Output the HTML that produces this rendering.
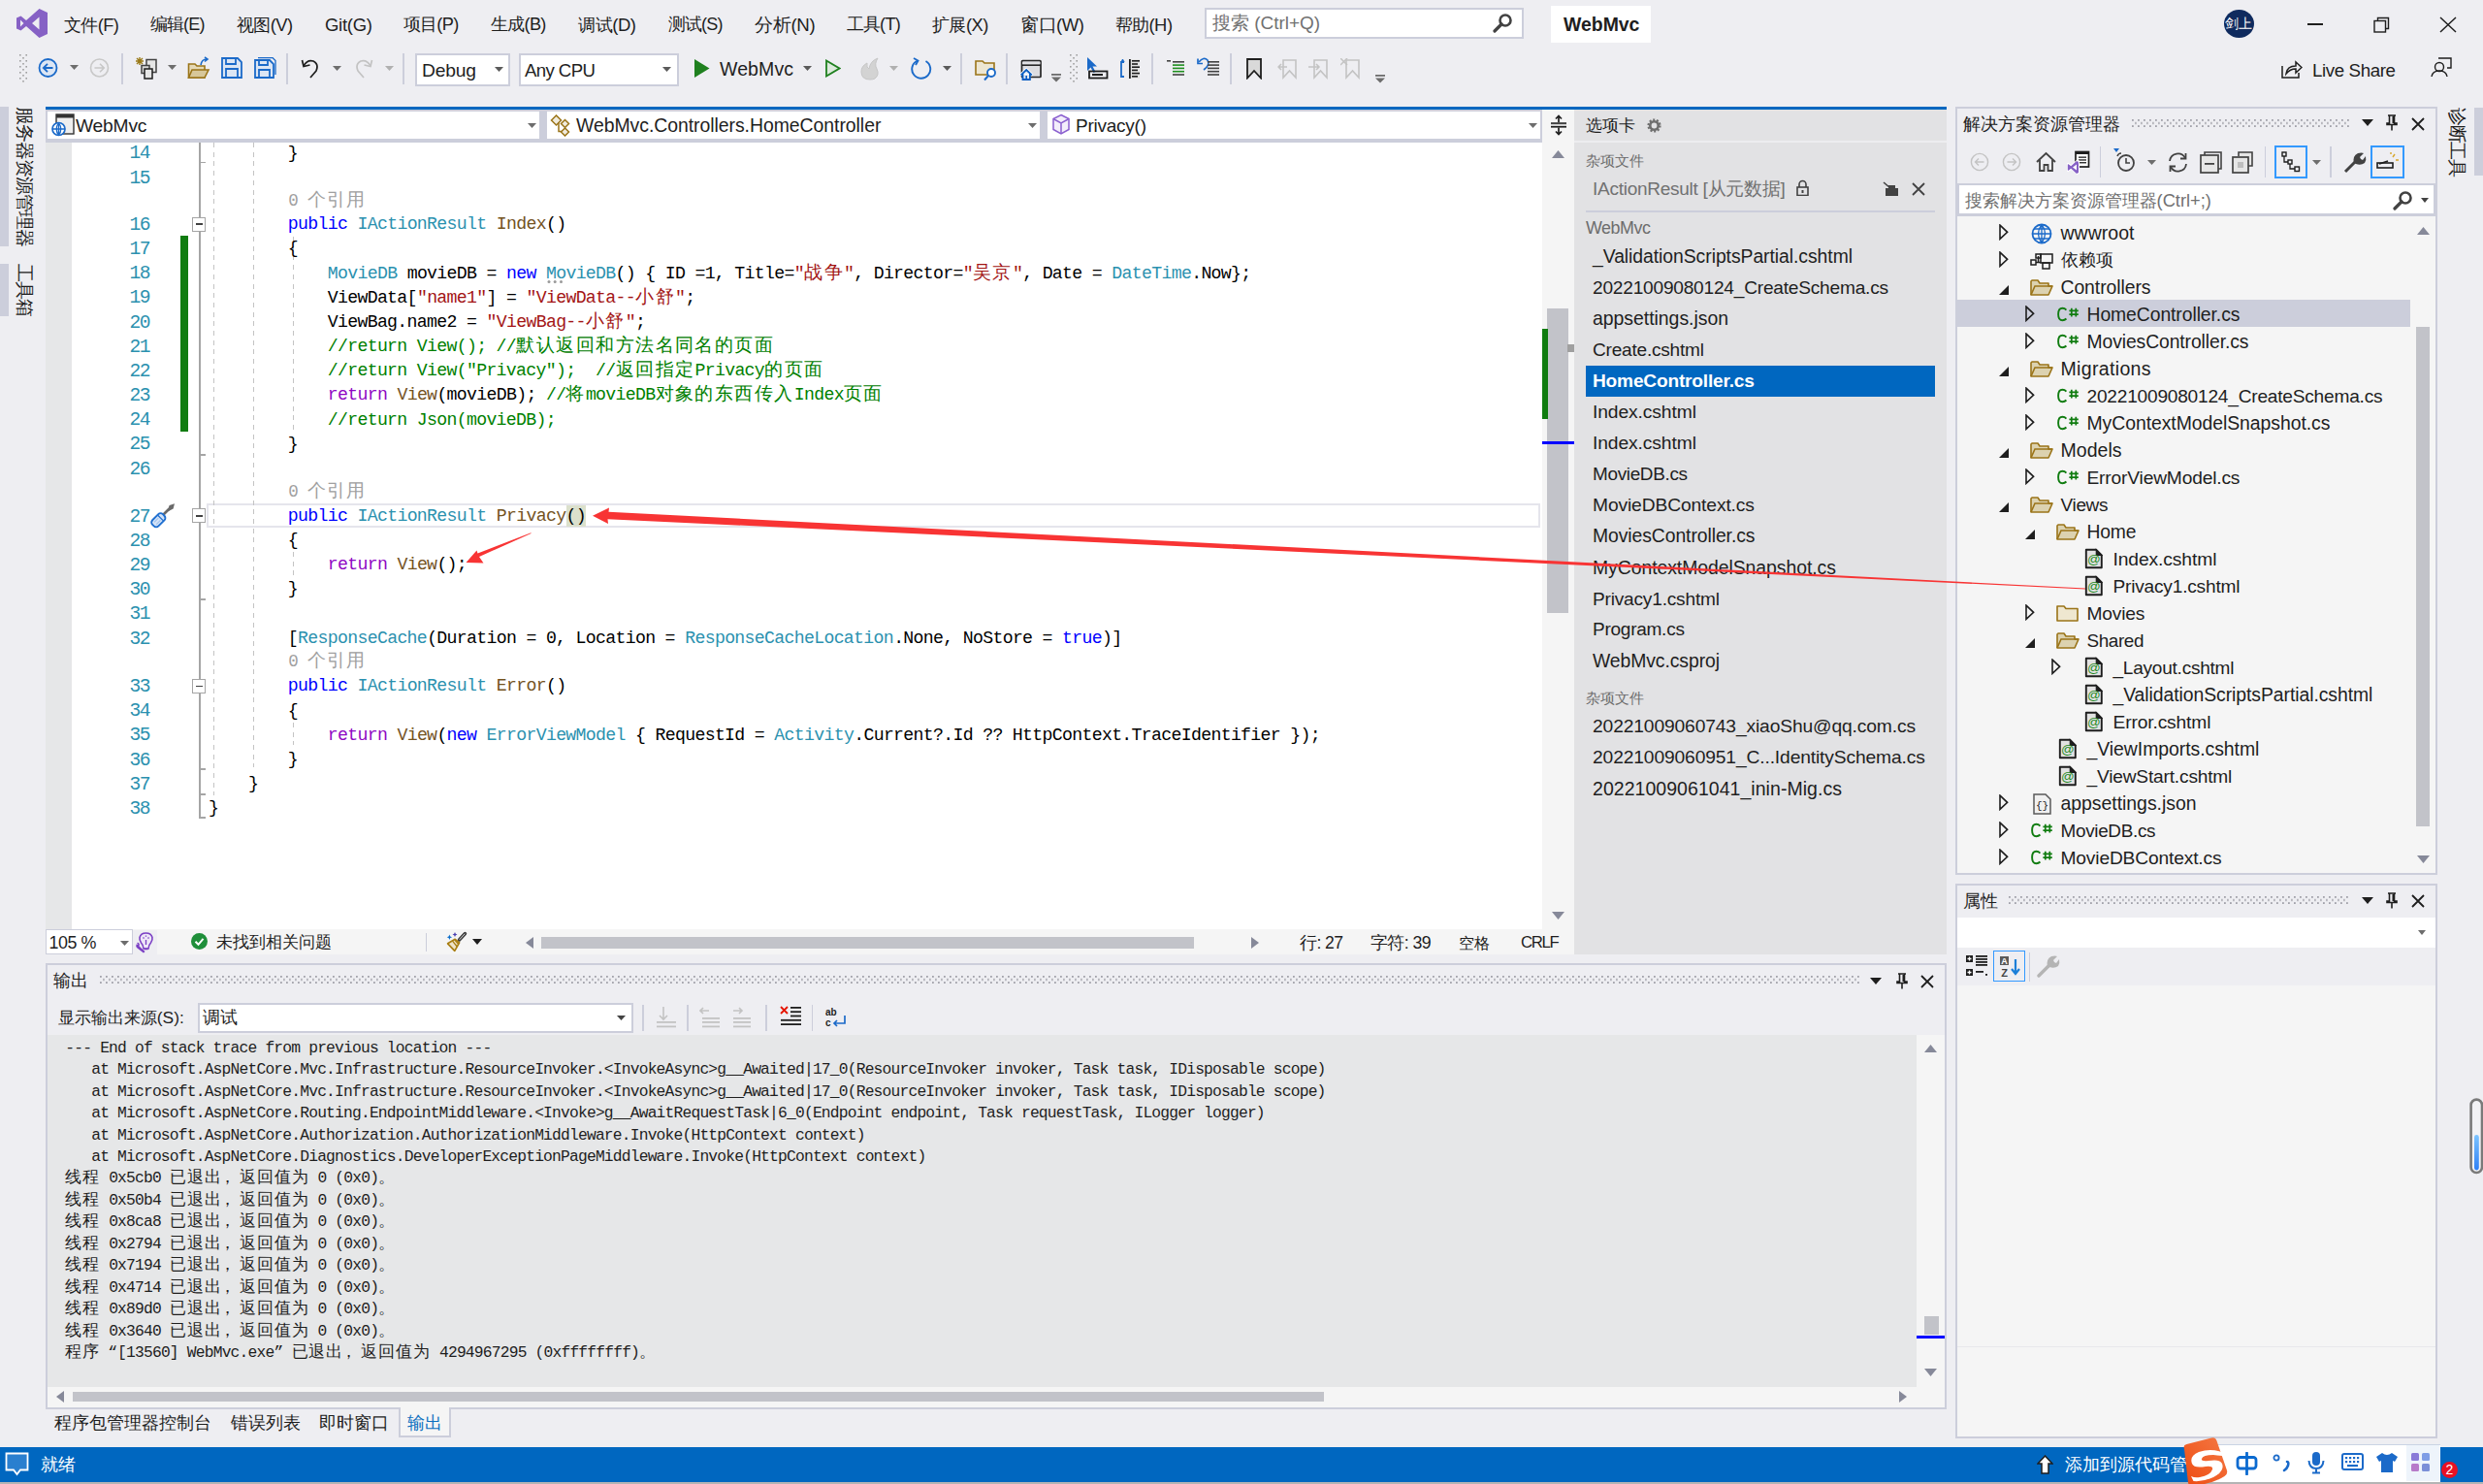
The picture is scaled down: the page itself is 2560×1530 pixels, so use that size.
<!DOCTYPE html>
<html><head><meta charset="utf-8"><title>VS</title>
<style>
html,body{margin:0;padding:0;width:2560px;height:1530px;overflow:hidden;background:#EEEEF2;}
body>div,body>svg{position:absolute;box-sizing:content-box;}
body{font-family:'Liberation Sans', sans-serif;}
</style></head><body>
<svg style="left:17px;top:9px" width="32" height="30" viewBox="0 0 32 30"><path d="M23.5 0 L32 4 V26 L23.5 30 L10 18 L4.5 22.5 L0 20.5 V9.5 L4.5 7.5 L10 12 Z M23.5 8.5 L16 15 L23.5 21.5 Z M4 11.5 V18.5 L7.5 15 Z" fill="#8661C5" fill-rule="evenodd"/></svg>
<div id="t1" style="left:66px;top:13.0px;height:25px;line-height:25px;font-family:'Liberation Sans', sans-serif;font-size:18.24px;color:#1E1E1E;font-weight:normal;white-space:pre;letter-spacing:-0.596px;">文件(F)</div>
<div id="t2" style="left:154.6px;top:13.0px;height:25px;line-height:25px;font-family:'Liberation Sans', sans-serif;font-size:18.04px;color:#1E1E1E;font-weight:normal;white-space:pre;letter-spacing:-0.758px;">编辑(E)</div>
<div id="t3" style="left:243.9px;top:13.0px;height:25px;line-height:25px;font-family:'Liberation Sans', sans-serif;font-size:18.32px;color:#1E1E1E;font-weight:normal;white-space:pre;letter-spacing:-0.543px;">视图(V)</div>
<div id="t4" style="left:335px;top:13.0px;height:25px;line-height:25px;font-family:'Liberation Sans', sans-serif;font-size:18.49px;color:#1E1E1E;font-weight:normal;white-space:pre;letter-spacing:-0.268px;">Git(G)</div>
<div id="t5" style="left:415.6px;top:13.0px;height:25px;line-height:25px;font-family:'Liberation Sans', sans-serif;font-size:18.18px;color:#1E1E1E;font-weight:normal;white-space:pre;letter-spacing:-0.651px;">项目(P)</div>
<div id="t6" style="left:505.8px;top:13.0px;height:25px;line-height:25px;font-family:'Liberation Sans', sans-serif;font-size:18.18px;color:#1E1E1E;font-weight:normal;white-space:pre;letter-spacing:-0.651px;">生成(B)</div>
<div id="t7" style="left:596px;top:13.0px;height:25px;line-height:25px;font-family:'Liberation Sans', sans-serif;font-size:18.49px;color:#1E1E1E;font-weight:normal;white-space:pre;letter-spacing:-0.418px;">调试(D)</div>
<div id="t8" style="left:688.5px;top:13.0px;height:25px;line-height:25px;font-family:'Liberation Sans', sans-serif;font-size:18.07px;color:#1E1E1E;font-weight:normal;white-space:pre;letter-spacing:-0.735px;">测试(S)</div>
<div id="t9" style="left:778px;top:13.0px;height:25px;line-height:25px;font-family:'Liberation Sans', sans-serif;font-size:18.64px;color:#1E1E1E;font-weight:normal;white-space:pre;letter-spacing:-0.296px;">分析(N)</div>
<div id="t10" style="left:872.5px;top:13.0px;height:25px;line-height:25px;font-family:'Liberation Sans', sans-serif;font-size:18.08px;color:#1E1E1E;font-weight:normal;white-space:pre;letter-spacing:-0.715px;">工具(T)</div>
<div id="t11" style="left:961px;top:13.0px;height:25px;line-height:25px;font-family:'Liberation Sans', sans-serif;font-size:18.34px;color:#1E1E1E;font-weight:normal;white-space:pre;letter-spacing:-0.531px;">扩展(X)</div>
<div id="t12" style="left:1052px;top:13.0px;height:25px;line-height:25px;font-family:'Liberation Sans', sans-serif;font-size:18.5px;color:#1E1E1E;font-weight:normal;white-space:pre;letter-spacing:-0.443px;">窗口(W)</div>
<div id="t13" style="left:1149.5px;top:13.0px;height:25px;line-height:25px;font-family:'Liberation Sans', sans-serif;font-size:18.39px;color:#1E1E1E;font-weight:normal;white-space:pre;letter-spacing:-0.503px;">帮助(H)</div>
<div style="left:1242px;top:7.5px;width:325px;height:28px;background:#FFFFFF;border:2px solid #CCCEDB;"></div>
<div id="t14" style="left:1250px;top:11.0px;height:25px;line-height:25px;font-family:'Liberation Sans', sans-serif;font-size:18.97px;color:#717171;font-weight:normal;white-space:pre;letter-spacing:-0.018px;">搜索 (Ctrl+Q)</div>
<svg style="left:1539px;top:13px" width="21" height="21" viewBox="0 0 21 21"><circle cx="13" cy="8" r="5.5" fill="none" stroke="#424242" stroke-width="2.6"/><path d="M9 12 L2 19" stroke="#424242" stroke-width="3.2" stroke-linecap="round"/></svg>
<div style="left:1599px;top:6px;width:103px;height:38px;background:#FFFFFF;"></div>
<div id="t15" style="left:1612px;top:12.5px;height:25px;line-height:25px;font-family:'Liberation Sans', sans-serif;font-size:19.47px;color:#1E1E1E;font-weight:bold;white-space:pre;letter-spacing:-0.025px;">WebMvc</div>
<div style="left:2293px;top:9.5px;width:31px;height:29px;border-radius:50%;background:#0F2A5E;"></div>
<div id="t16" style="left:2294px;top:15.0px;height:19px;line-height:19px;font-family:'Liberation Sans', sans-serif;font-size:14.02px;color:#FFFFFF;font-weight:normal;white-space:pre;letter-spacing:0.000px;">剑上</div>
<div style="left:2379px;top:24px;width:16px;height:1.5px;background:#1E1E1E;"></div>
<svg style="left:2447px;top:17px" width="18" height="17" viewBox="0 0 18 17"><rect x="1" y="4.5" width="11.5" height="11.5" fill="none" stroke="#1E1E1E" stroke-width="1.4"/><path d="M4.5 4.5 V1.5 H15.5 V12.5 H12.5" fill="none" stroke="#1E1E1E" stroke-width="1.4"/></svg>
<svg style="left:2515px;top:17px" width="18" height="17" viewBox="0 0 18 17"><path d="M1 1 L17 16 M17 1 L1 16" stroke="#1E1E1E" stroke-width="1.5"/></svg>
<svg style="left:19.5px;top:55.8px" width="9" height="30" viewBox="0 0 9 30"><rect x="0" y="0" width="1.6" height="1.6" fill="#A0A0A0"/><rect x="6.4" y="0" width="1.6" height="1.6" fill="#A0A0A0"/><rect x="3.2" y="3" width="1.6" height="1.6" fill="#A0A0A0"/><rect x="0" y="6" width="1.6" height="1.6" fill="#A0A0A0"/><rect x="6.4" y="6" width="1.6" height="1.6" fill="#A0A0A0"/><rect x="3.2" y="9" width="1.6" height="1.6" fill="#A0A0A0"/><rect x="0" y="12" width="1.6" height="1.6" fill="#A0A0A0"/><rect x="6.4" y="12" width="1.6" height="1.6" fill="#A0A0A0"/><rect x="3.2" y="15" width="1.6" height="1.6" fill="#A0A0A0"/><rect x="0" y="18" width="1.6" height="1.6" fill="#A0A0A0"/><rect x="6.4" y="18" width="1.6" height="1.6" fill="#A0A0A0"/><rect x="3.2" y="21" width="1.6" height="1.6" fill="#A0A0A0"/><rect x="0" y="24" width="1.6" height="1.6" fill="#A0A0A0"/><rect x="6.4" y="24" width="1.6" height="1.6" fill="#A0A0A0"/><rect x="3.2" y="27" width="1.6" height="1.6" fill="#A0A0A0"/></svg>
<svg style="left:39px;top:59px" width="22" height="22" viewBox="0 0 22 22"><circle cx="10.5" cy="11" r="9" fill="#DCE6F4" stroke="#1B6AC9" stroke-width="1.8"/><path d="M15.5 11 H6 M10 6.8 L5.8 11 L10 15.2" fill="none" stroke="#1B6AC9" stroke-width="1.8"/></svg>
<svg style="left:72px;top:67px" width="9" height="6" viewBox="0 0 9 6"><path d="M0 0 H9 L4.5 5 Z" fill="#6D6D6D"/></svg>
<svg style="left:92px;top:59px" width="22" height="22" viewBox="0 0 22 22"><circle cx="10.5" cy="11" r="9" fill="none" stroke="#C8C8C8" stroke-width="1.6"/><path d="M5.5 11 H15 M11 6.8 L15.2 11 L11 15.2" fill="none" stroke="#C8C8C8" stroke-width="1.6"/></svg>
<div style="left:124.5px;top:55px;width:2px;height:32px;background:#CCCEDB;"></div>
<svg style="left:139px;top:58px" width="26" height="26" viewBox="0 0 26 26"><g stroke="#9A7A18" stroke-width="1.4"><path d="M5 1 V9 M1 5 H9 M2 2 L8 8 M8 2 L2 8"/></g><rect x="12" y="3.5" width="10" height="13" fill="#E6E6E6" stroke="#424242" stroke-width="1.5"/><rect x="7" y="9.5" width="8" height="8" fill="#D8D8D8" stroke="#424242" stroke-width="1.5"/><rect x="10" y="13" width="8" height="10" fill="#E6E6E6" stroke="#1E1E1E" stroke-width="1.5"/></svg>
<svg style="left:173px;top:67px" width="9" height="6" viewBox="0 0 9 6"><path d="M0 0 H9 L4.5 5 Z" fill="#6D6D6D"/></svg>
<svg style="left:193px;top:58px" width="24" height="24" viewBox="0 0 24 24"><path d="M1.5 8 H8 L10 10 H18 V22 H1.5 Z" fill="#E5D9B6" stroke="#9A7418" stroke-width="1.6"/><path d="M1.5 22 L5 14 H22 L18 22 Z" fill="#D7C79A" stroke="#9A7418" stroke-width="1.6"/><path d="M14 9 Q15 3 20 3 M18 1 L21 3 L18 5.5" fill="none" stroke="#1B6AC9" stroke-width="1.6"/></svg>
<svg style="left:228px;top:59px" width="22" height="22" viewBox="0 0 22 22"><path d="M1 1 H17 L21 5 V21 H1 Z" fill="#DCE6F4" stroke="#1B6AC9" stroke-width="1.8"/><path d="M5 1 V7 H15 V1 M5 21 V12 H17 V21" fill="none" stroke="#1B6AC9" stroke-width="1.8"/></svg>
<svg style="left:262px;top:59px" width="23" height="22" viewBox="0 0 23 22"><path d="M4 0.5 H19 L22 3.5 V18" fill="none" stroke="#1B6AC9" stroke-width="1.3"/><path d="M1 3 H16 L20 7 V21 H1 Z" fill="#DCE6F4" stroke="#1B6AC9" stroke-width="1.8"/><path d="M5 3 V8 H14 V3 M5 21 V13 H16 V21" fill="none" stroke="#1B6AC9" stroke-width="1.8"/></svg>
<div style="left:294.5px;top:55px;width:2px;height:32px;background:#CCCEDB;"></div>
<svg style="left:310px;top:59px" width="20" height="22" viewBox="0 0 20 22"><path d="M3 9 Q7 2 13 4 Q19 7 16 14 L10 21" fill="none" stroke="#1E1E1E" stroke-width="1.7"/><path d="M1.5 3 L3 9.5 L9.5 8" fill="none" stroke="#1E1E1E" stroke-width="1.7"/></svg>
<svg style="left:343px;top:68px" width="9" height="6" viewBox="0 0 9 6"><path d="M0 0 H9 L4.5 5 Z" fill="#6D6D6D"/></svg>
<svg style="left:365px;top:59px" width="20" height="22" viewBox="0 0 20 22"><path d="M17 9 Q13 2 7 4 Q1 7 4 14 L10 21" fill="none" stroke="#C3C3C3" stroke-width="1.7"/><path d="M18.5 3 L17 9.5 L10.5 8" fill="none" stroke="#C3C3C3" stroke-width="1.7"/></svg>
<svg style="left:397px;top:68px" width="9" height="6" viewBox="0 0 9 6"><path d="M0 0 H9 L4.5 5 Z" fill="#B0B0B0"/></svg>
<div style="left:415px;top:55px;width:2px;height:32px;background:#CCCEDB;"></div>
<div style="left:428px;top:55px;width:94px;height:30px;background:#FFFFFF;border:2px solid #CCCEDB;"></div>
<div id="t17" style="left:435px;top:59.5px;height:25px;line-height:25px;font-family:'Liberation Sans', sans-serif;font-size:19.25px;color:#1E1E1E;font-weight:normal;white-space:pre;letter-spacing:-0.182px;">Debug</div>
<svg style="left:510px;top:69px" width="9" height="6" viewBox="0 0 9 6"><path d="M0 0 H9 L4.5 5 Z" fill="#5A5A5A"/></svg>
<div style="left:535px;top:55px;width:161px;height:30px;background:#FFFFFF;border:2px solid #CCCEDB;"></div>
<div id="t18" style="left:541px;top:59.5px;height:25px;line-height:25px;font-family:'Liberation Sans', sans-serif;font-size:18.6px;color:#1E1E1E;font-weight:normal;white-space:pre;letter-spacing:-0.586px;">Any CPU</div>
<svg style="left:683px;top:69px" width="9" height="6" viewBox="0 0 9 6"><path d="M0 0 H9 L4.5 5 Z" fill="#5A5A5A"/></svg>
<svg style="left:716px;top:61px" width="16" height="19" viewBox="0 0 16 19"><path d="M0 0 L15.5 9.5 L0 19 Z" fill="#1F801F"/></svg>
<div id="t19" style="left:742px;top:58.5px;height:25px;line-height:25px;font-family:'Liberation Sans', sans-serif;font-size:19.5px;color:#1E1E1E;font-weight:normal;white-space:pre;letter-spacing:0.100px;">WebMvc</div>
<svg style="left:828px;top:68px" width="9" height="6" viewBox="0 0 9 6"><path d="M0 0 H9 L4.5 5 Z" fill="#5A5A5A"/></svg>
<svg style="left:851px;top:61px" width="16" height="19" viewBox="0 0 16 19"><path d="M1 1.5 L14.5 9.5 L1 17.5 Z" fill="#DCEADC" stroke="#1F801F" stroke-width="1.8"/></svg>
<svg style="left:886px;top:59px" width="22" height="24" viewBox="0 0 22 24"><path d="M11 23 Q2 23 2 15 Q2 9 8 6 Q7 11 10 12 Q11 4 19 1 Q15 7 18 12 Q21 18 16 22 Q14 23 11 23 Z" fill="#D3D3D3" stroke="#C6C6C6" stroke-width="1"/></svg>
<svg style="left:917px;top:68px" width="9" height="6" viewBox="0 0 9 6"><path d="M0 0 H9 L4.5 5 Z" fill="#B0B0B0"/></svg>
<svg style="left:939px;top:59px" width="22" height="24" viewBox="0 0 22 24"><path d="M7 3.5 A9.5 9.5 0 1 0 15.5 4" fill="none" stroke="#1B6AC9" stroke-width="1.9"/><path d="M3 1 L7.5 3.5 L5 8" fill="none" stroke="#1B6AC9" stroke-width="1.9"/></svg>
<svg style="left:972px;top:68px" width="9" height="6" viewBox="0 0 9 6"><path d="M0 0 H9 L4.5 5 Z" fill="#5A5A5A"/></svg>
<div style="left:990px;top:55px;width:2px;height:32px;background:#CCCEDB;"></div>
<svg style="left:1005px;top:61px" width="24" height="23" viewBox="0 0 24 23"><path d="M1 2 H8 L10 4 H20 V16 H1 Z" fill="#EDE6D2" stroke="#9A7418" stroke-width="1.6"/><circle cx="17" cy="14" r="4" fill="#FFFFFF" stroke="#1B6AC9" stroke-width="1.9"/><path d="M14 17 L10 21.5" stroke="#1B6AC9" stroke-width="2"/></svg>
<div style="left:1037px;top:55px;width:2px;height:32px;background:#CCCEDB;"></div>
<svg style="left:1051px;top:61px" width="25" height="23" viewBox="0 0 25 23"><rect x="2.5" y="1.5" width="19.5" height="17" rx="0.8" fill="#DCDCE0" stroke="#262626" stroke-width="1.7"/><rect x="3" y="3" width="18.5" height="2.6" fill="#E0E0E4"/><rect x="2.5" y="5.4" width="19.5" height="1.6" fill="#262626"/><path d="M1 16.5 L7.2 10.6 L13.4 16.5" fill="#FFFFFF" stroke="#FFFFFF" stroke-width="3"/><path d="M1.6 16.3 L7.2 11 L12.8 16.3 M3.5 14.8 V21 H10.9 V14.8" fill="#DCE6F4" stroke="#0A5EC2" stroke-width="1.8"/><rect x="6.4" y="17" width="1.6" height="4" fill="#0A5EC2"/></svg>
<svg style="left:1084px;top:76px" width="10" height="9" viewBox="0 0 10 9"><rect x="0" y="0" width="10" height="1.8" fill="#6D6D6D"/><path d="M0 3.5 H10 L5 8.5 Z" fill="#6D6D6D"/></svg>
<svg style="left:1103px;top:55.8px" width="9" height="30" viewBox="0 0 9 30"><rect x="0" y="0" width="1.6" height="1.6" fill="#A0A0A0"/><rect x="6.4" y="0" width="1.6" height="1.6" fill="#A0A0A0"/><rect x="3.2" y="3" width="1.6" height="1.6" fill="#A0A0A0"/><rect x="0" y="6" width="1.6" height="1.6" fill="#A0A0A0"/><rect x="6.4" y="6" width="1.6" height="1.6" fill="#A0A0A0"/><rect x="3.2" y="9" width="1.6" height="1.6" fill="#A0A0A0"/><rect x="0" y="12" width="1.6" height="1.6" fill="#A0A0A0"/><rect x="6.4" y="12" width="1.6" height="1.6" fill="#A0A0A0"/><rect x="3.2" y="15" width="1.6" height="1.6" fill="#A0A0A0"/><rect x="0" y="18" width="1.6" height="1.6" fill="#A0A0A0"/><rect x="6.4" y="18" width="1.6" height="1.6" fill="#A0A0A0"/><rect x="3.2" y="21" width="1.6" height="1.6" fill="#A0A0A0"/><rect x="0" y="24" width="1.6" height="1.6" fill="#A0A0A0"/><rect x="6.4" y="24" width="1.6" height="1.6" fill="#A0A0A0"/><rect x="3.2" y="27" width="1.6" height="1.6" fill="#A0A0A0"/></svg>
<svg style="left:1119px;top:59px" width="24" height="23" viewBox="0 0 24 23"><path d="M2 0 L2 14 L5.5 10.5 L8.5 16 L10.5 15 L7.5 9.5 L12 9.5 Z" fill="#1B6AC9"/><rect x="4" y="14.5" width="18.5" height="7" fill="none" stroke="#1E1E1E" stroke-width="1.8"/><rect x="7" y="17" width="11" height="2" fill="#1E1E1E"/></svg>
<svg style="left:1154px;top:60px" width="22" height="22" viewBox="0 0 22 22"><path d="M5 4 H2 V19 H5" fill="none" stroke="#1B6AC9" stroke-width="1.8"/><path d="M2 4 L4 1.5 M5 4 L3 1.5" stroke="#1B6AC9" stroke-width="1.6"/><rect x="10" y="1" width="1.8" height="20" fill="#1E1E1E"/><rect x="12" y="1" width="9" height="20" fill="#E3E3E3"/><rect x="13" y="2.0" width="8" height="1.6" fill="#1E1E1E"/><rect x="13" y="5.2" width="6" height="1.6" fill="#1E1E1E"/><rect x="13" y="8.4" width="8" height="1.6" fill="#1E1E1E"/><rect x="13" y="11.6" width="6" height="1.6" fill="#1E1E1E"/><rect x="13" y="14.8" width="8" height="1.6" fill="#1E1E1E"/><rect x="13" y="18.0" width="6" height="1.6" fill="#1E1E1E"/></svg>
<div style="left:1186.5px;top:55px;width:2px;height:32px;background:#CCCEDB;"></div>
<svg style="left:1203px;top:62px" width="19" height="18" viewBox="0 0 19 18"><rect x="0" y="0" width="4" height="1.6" fill="#424242"/><rect x="6" y="1.0" width="12" height="1.6" fill="#424242"/><rect x="6" y="4.3" width="12" height="1.6" fill="#1F8F1F"/><rect x="6" y="7.6" width="12" height="1.6" fill="#1F8F1F"/><rect x="6" y="10.9" width="12" height="1.6" fill="#1F8F1F"/><rect x="6" y="14.2" width="12" height="1.6" fill="#424242"/></svg>
<svg style="left:1234px;top:59px" width="23" height="21" viewBox="0 0 23 21"><path d="M2 5 Q7 -1 11 3 Q14 8 7 13" fill="none" stroke="#1B6AC9" stroke-width="1.7"/><path d="M1 1.5 V6.5 H6" fill="none" stroke="#1B6AC9" stroke-width="1.7"/><rect x="11" y="4.0" width="12" height="1.6" fill="#424242"/><rect x="11" y="7.3" width="12" height="1.6" fill="#424242"/><rect x="11" y="10.6" width="12" height="1.6" fill="#424242"/><rect x="11" y="13.9" width="12" height="1.6" fill="#424242"/><rect x="11" y="17.2" width="12" height="1.6" fill="#424242"/></svg>
<div style="left:1267.5px;top:55px;width:2px;height:32px;background:#CCCEDB;"></div>
<svg style="left:1285px;top:60px" width="16" height="22" viewBox="0 0 16 22"><path d="M1 1 H15 V20.5 L8 13 L1 20.5 Z" fill="#D9D9D9" stroke="#1E1E1E" stroke-width="1.8"/></svg>
<svg style="left:1317px;top:60px" width="21" height="22" viewBox="0 0 21 22"><path d="M6 2 H19 V20 L12.5 13 L6 20 Z" fill="none" stroke="#C3C3C3" stroke-width="1.6"/><path d="M10 9 H1 M4 6 L1 9 L4 12" fill="none" stroke="#C3C3C3" stroke-width="1.5"/></svg>
<svg style="left:1349px;top:60px" width="21" height="22" viewBox="0 0 21 22"><path d="M6 2 H19 V20 L12.5 13 L6 20 Z" fill="none" stroke="#C3C3C3" stroke-width="1.6"/><path d="M0 9 H11 M8 6 L11 9 L8 12" fill="none" stroke="#C3C3C3" stroke-width="1.5"/></svg>
<svg style="left:1382px;top:60px" width="21" height="22" viewBox="0 0 21 22"><path d="M6 2 H19 V20 L12.5 13 L6 20 Z" fill="none" stroke="#C3C3C3" stroke-width="1.6"/><path d="M0 0 L7 7 M7 0 L0 7" stroke="#C3C3C3" stroke-width="1.5"/></svg>
<svg style="left:1418px;top:77px" width="10" height="9" viewBox="0 0 10 9"><rect x="0" y="0" width="10" height="1.8" fill="#6D6D6D"/><path d="M0 3.5 H10 L5 8.5 Z" fill="#6D6D6D"/></svg>
<svg style="left:2352px;top:61px" width="22" height="20" viewBox="0 0 22 20"><path d="M1 7 V19 H18 V14" fill="none" stroke="#1E1E1E" stroke-width="1.5"/><path d="M5 15 Q6 7 15 7 V3 L21 8.5 L15 14 V10 Q9 10 5 15 Z" fill="none" stroke="#1E1E1E" stroke-width="1.5"/></svg>
<div id="t20" style="left:2384px;top:59.5px;height:25px;line-height:25px;font-family:'Liberation Sans', sans-serif;font-size:18.73px;color:#1E1E1E;font-weight:normal;white-space:pre;letter-spacing:-0.394px;">Live Share</div>
<svg style="left:2506px;top:58px" width="23" height="22" viewBox="0 0 23 22"><path d="M8 2 H21 V12 H17" fill="none" stroke="#1E1E1E" stroke-width="1.4"/><circle cx="9" cy="11" r="4.5" fill="none" stroke="#1E1E1E" stroke-width="1.4"/><path d="M1 21 Q2 15 9 15 Q16 15 17 21" fill="none" stroke="#1E1E1E" stroke-width="1.4"/></svg>
<div style="left:0px;top:110px;width:8.5px;height:144px;background:#CCCEDB;"></div>
<div style="left:0px;top:272px;width:8.5px;height:54px;background:#CCCEDB;"></div>
<div style="left:14px;top:110px;width:22px;height:144px;writing-mode:vertical-rl;text-orientation:sideways;font-size:19px;line-height:22px;color:#1E1E1E;letter-spacing:-1px;white-space:nowrap">服务器资源管理器</div>
<div style="left:14px;top:272px;width:22px;height:54px;writing-mode:vertical-rl;text-orientation:sideways;font-size:19px;line-height:22px;color:#1E1E1E;letter-spacing:-1px;white-space:nowrap">工具箱</div>
<div style="left:2522px;top:111px;width:22px;height:70px;writing-mode:vertical-rl;text-orientation:sideways;font-size:19px;line-height:22px;color:#1E1E1E;letter-spacing:-1.5px;white-space:nowrap">诊断工具</div>
<div style="left:2551px;top:111px;width:9px;height:70px;background:#CCCEDB;"></div>
<div style="left:47px;top:110px;width:1960px;height:3px;background:#0067C0;"></div>
<div style="left:47px;top:113px;width:1576px;height:34px;background:#CCCEDB;"></div>
<div style="left:49px;top:115px;width:507px;height:28px;background:#FFFFFF;"></div>
<svg style="left:53px;top:117px" width="24" height="24" viewBox="0 0 24 24"><rect x="5" y="1" width="18" height="20" fill="#EEEEEE" stroke="#333" stroke-width="1.4"/><rect x="5" y="1" width="18" height="3.5" fill="#333"/><circle cx="7.5" cy="16" r="6.5" fill="#FFFFFF" stroke="#1B6AC9" stroke-width="1.7"/><path d="M1 16 H14 M7.5 9.5 V22.5 M7.5 9.5 Q3 16 7.5 22.5 M7.5 9.5 Q12 16 7.5 22.5" fill="none" stroke="#1B6AC9" stroke-width="1.3"/></svg>
<div id="t21" style="left:78px;top:116.5px;height:25px;line-height:25px;font-family:'Liberation Sans', sans-serif;font-size:19.24px;color:#1E1E1E;font-weight:normal;white-space:pre;letter-spacing:-0.199px;">WebMvc</div>
<svg style="left:544px;top:127px" width="9" height="5" viewBox="0 0 9 5"><path d="M0 0 H9 L4.5 5 Z" fill="#6D6D6D"/></svg>
<div style="left:564px;top:115px;width:508px;height:28px;background:#FFFFFF;"></div>
<svg style="left:567px;top:118px" width="24" height="23" viewBox="0 0 24 23"><path d="M1.5 6 L6.5 1 L11.5 6 L6.5 11 Z" fill="#F0EBDD" stroke="#9A7418" stroke-width="1.5"/><path d="M15.5 5.5 L19.5 9.5 L15.5 13.5 L11.5 9.5 Z M15.5 14 L19.5 18 L15.5 22 L11.5 18 Z" fill="#F0EBDD" stroke="#9A7418" stroke-width="1.5"/><path d="M9 8.5 V17.5 H12" fill="none" stroke="#9A7418" stroke-width="1.5"/></svg>
<div id="t22" style="left:594px;top:116.5px;height:25px;line-height:25px;font-family:'Liberation Sans', sans-serif;font-size:19.42px;color:#1E1E1E;font-weight:normal;white-space:pre;letter-spacing:-0.040px;">WebMvc.Controllers.HomeController</div>
<svg style="left:1060px;top:127px" width="9" height="5" viewBox="0 0 9 5"><path d="M0 0 H9 L4.5 5 Z" fill="#6D6D6D"/></svg>
<div style="left:1080px;top:115px;width:508px;height:28px;background:#FFFFFF;"></div>
<svg style="left:1084px;top:117px" width="20" height="23" viewBox="0 0 20 23"><path d="M10 1.5 L18 5.5 V16.5 L10 21 L2 16.5 V5.5 Z" fill="#F3EEFB" stroke="#8A5FCF" stroke-width="1.5"/><path d="M2 5.5 L10 10 L18 5.5 M10 10 V21" fill="none" stroke="#8A5FCF" stroke-width="1.5"/></svg>
<div id="t23" style="left:1109px;top:116.5px;height:25px;line-height:25px;font-family:'Liberation Sans', sans-serif;font-size:19.0px;color:#1E1E1E;font-weight:normal;white-space:pre;letter-spacing:-0.242px;">Privacy()</div>
<svg style="left:1576px;top:127px" width="9" height="5" viewBox="0 0 9 5"><path d="M0 0 H9 L4.5 5 Z" fill="#6D6D6D"/></svg>
<div style="left:1590px;top:113px;width:33px;height:34px;background:#F5F5F5;"></div>
<svg style="left:1598px;top:118px" width="18" height="22" viewBox="0 0 18 22"><rect x="1" y="8.3" width="16" height="1.6" fill="#1E1E1E"/><rect x="1" y="12" width="16" height="1.6" fill="#1E1E1E"/><rect x="1" y="9.9" width="16" height="2.1" fill="#D0D0D0"/><path d="M9 1.5 V8.3 M6 4.5 L9 1.5 L12 4.5 M9 13.6 V20.5 M6 17.5 L9 20.5 L12 17.5" fill="none" stroke="#1E1E1E" stroke-width="1.7"/></svg>
<div style="left:47px;top:147px;width:27px;height:811px;background:#E6E7E8;"></div>
<div style="left:74px;top:147px;width:1516px;height:811px;background:#FFFFFF;"></div>
<div style="left:1590px;top:147px;width:33px;height:811px;background:#F5F5F5;"></div>
<svg style="left:1600px;top:155px" width="13" height="8" viewBox="0 0 13 8"><path d="M0 8 L6.5 0 L13 8 Z" fill="#868999"/></svg>
<div style="left:1595px;top:318px;width:22px;height:314px;background:#C2C3C9;"></div>
<div style="left:1590px;top:339px;width:5.5px;height:93px;background:#107C10;"></div>
<div style="left:1616px;top:355px;width:7px;height:8px;background:#A0A0A0;"></div>
<div style="left:1590px;top:455px;width:33px;height:2.5px;background:#0000FF;"></div>
<svg style="left:1600px;top:940px" width="13" height="8" viewBox="0 0 13 8"><path d="M0 0 L6.5 8 L13 0 Z" fill="#868999"/></svg>
<div style="left:213px;top:519px;width:1371px;height:21px;background:transparent;border:2px solid #E5E5EC;"></div>
<div style="left:583.5px;top:520.5px;width:20.3px;height:22px;background:#DBE0CC;"></div>
<div style="left:205px;top:147px;width:1.8px;height:697px;background:#A5A5A5;"></div>
<div style="left:205px;top:166.7px;width:7px;height:1.8px;background:#A5A5A5;"></div>
<div style="left:205px;top:467.8px;width:7px;height:1.8px;background:#A5A5A5;"></div>
<div style="left:205px;top:617px;width:7px;height:1.8px;background:#A5A5A5;"></div>
<div style="left:205px;top:792.3px;width:7px;height:1.8px;background:#A5A5A5;"></div>
<div style="left:205px;top:818px;width:7px;height:1.8px;background:#A5A5A5;"></div>
<div style="left:205px;top:842.3px;width:7px;height:1.8px;background:#A5A5A5;"></div>
<div style="left:198px;top:223.6px;width:12px;height:13px;background:#FFFFFF;border:1px solid #A5A5A5;"></div>
<div style="left:201.5px;top:230.29999999999998px;width:7px;height:1.6px;background:#424242;"></div>
<div style="left:198px;top:524.4px;width:12px;height:13px;background:#FFFFFF;border:1px solid #A5A5A5;"></div>
<div style="left:201.5px;top:531.1px;width:7px;height:1.6px;background:#424242;"></div>
<div style="left:198px;top:699.8px;width:12px;height:13px;background:#FFFFFF;border:1px solid #A5A5A5;"></div>
<div style="left:201.5px;top:706.5px;width:7px;height:1.6px;background:#424242;"></div>
<div style="left:219.5px;top:147px;width:1.7px;height:673px;background:repeating-linear-gradient(to bottom,#C4C4C4 0 5px,transparent 5px 9.7px)"></div>
<div style="left:260.5px;top:147px;width:1.7px;height:644px;background:repeating-linear-gradient(to bottom,#C4C4C4 0 5px,transparent 5px 9.7px)"></div>
<div style="left:301.5px;top:244px;width:1.7px;height:201px;background:repeating-linear-gradient(to bottom,#C4C4C4 0 5px,transparent 5px 9.7px)"></div>
<div style="left:301.5px;top:569px;width:1.7px;height:27px;background:repeating-linear-gradient(to bottom,#C4C4C4 0 5px,transparent 5px 9.7px)"></div>
<div style="left:301.5px;top:745px;width:1.7px;height:23px;background:repeating-linear-gradient(to bottom,#C4C4C4 0 5px,transparent 5px 9.7px)"></div>
<div style="left:186px;top:243px;width:8px;height:201.5px;background:#107C10;"></div>
<svg style="left:150px;top:515px" width="32" height="32" viewBox="0 0 32 32"><path d="M17.5 16.5 L24.5 9.5" stroke="#6A6A6A" stroke-width="2.6"/><polygon points="22.8,11.6 24.6,6 30,4.3 28.6,9.6 23.4,12.2" fill="#6A6A6A"/><g transform="translate(13.3 21.3) rotate(-45)"><rect x="-7.6" y="-4.4" width="15.2" height="8.8" rx="3.3" fill="#D4E3F7" stroke="#1F6FD0" stroke-width="1.9"/><path d="M3.2 -4 V4" stroke="#1F6FD0" stroke-width="1.3"/><path d="M-4.5 -1.5 H1.5 M-4.5 1.5 H1.5" stroke="#9EC0EE" stroke-width="1"/></g></svg>
<div style="left:100px;top:146.3px;width:54px;height:25px;line-height:25px;text-align:right;font-family:'Liberation Mono', monospace;font-size:19.6px;letter-spacing:-1.526px;color:#2B91AF;white-space:pre">14</div>
<div style="left:215.00px;top:145.6px;height:24px;line-height:24px;font-family:'Liberation Mono', monospace;font-size:18.2px;letter-spacing:-0.686px;color:#000000;white-space:pre">        }</div>
<div style="left:100px;top:171.7px;width:54px;height:25px;line-height:25px;text-align:right;font-family:'Liberation Mono', monospace;font-size:19.6px;letter-spacing:-1.526px;color:#2B91AF;white-space:pre">15</div>
<div style="left:218.00px;top:195.5px;height:23px;line-height:23px;font-family:'Liberation Mono', monospace;font-size:17.5px;letter-spacing:-0.600px;color:#A0A0A0;white-space:pre">        0 </div>
<div style="left:317.00px;top:195.5px;width:19.80px;height:23px;line-height:23px;font-family:'Liberation Mono', monospace;font-size:18.61px;color:#A0A0A0;white-space:pre;text-align:left">个</div>
<div style="left:336.80px;top:195.5px;width:19.80px;height:23px;line-height:23px;font-family:'Liberation Mono', monospace;font-size:18.61px;color:#A0A0A0;white-space:pre;text-align:left">引</div>
<div style="left:356.60px;top:195.5px;width:19.80px;height:23px;line-height:23px;font-family:'Liberation Mono', monospace;font-size:18.61px;color:#A0A0A0;white-space:pre;text-align:left">用</div>
<div style="left:100px;top:219.8px;width:54px;height:25px;line-height:25px;text-align:right;font-family:'Liberation Mono', monospace;font-size:19.6px;letter-spacing:-1.526px;color:#2B91AF;white-space:pre">16</div>
<div style="left:215.00px;top:219.1px;height:24px;line-height:24px;font-family:'Liberation Mono', monospace;font-size:18.2px;letter-spacing:-0.686px;color:#0000FF;white-space:pre">        public</div>
<div style="left:358.28px;top:219.1px;height:24px;line-height:24px;font-family:'Liberation Mono', monospace;font-size:18.2px;letter-spacing:-0.686px;color:#000000;white-space:pre"> </div>
<div style="left:368.51px;top:219.1px;height:24px;line-height:24px;font-family:'Liberation Mono', monospace;font-size:18.2px;letter-spacing:-0.686px;color:#2B91AF;white-space:pre">IActionResult</div>
<div style="left:501.55px;top:219.1px;height:24px;line-height:24px;font-family:'Liberation Mono', monospace;font-size:18.2px;letter-spacing:-0.686px;color:#000000;white-space:pre"> </div>
<div style="left:511.79px;top:219.1px;height:24px;line-height:24px;font-family:'Liberation Mono', monospace;font-size:18.2px;letter-spacing:-0.686px;color:#74531F;white-space:pre">Index</div>
<div style="left:562.96px;top:219.1px;height:24px;line-height:24px;font-family:'Liberation Mono', monospace;font-size:18.2px;letter-spacing:-0.686px;color:#000000;white-space:pre">()</div>
<div style="left:100px;top:245.0px;width:54px;height:25px;line-height:25px;text-align:right;font-family:'Liberation Mono', monospace;font-size:19.6px;letter-spacing:-1.526px;color:#2B91AF;white-space:pre">17</div>
<div style="left:215.00px;top:244.3px;height:24px;line-height:24px;font-family:'Liberation Mono', monospace;font-size:18.2px;letter-spacing:-0.686px;color:#000000;white-space:pre">        {</div>
<div style="left:100px;top:270.2px;width:54px;height:25px;line-height:25px;text-align:right;font-family:'Liberation Mono', monospace;font-size:19.6px;letter-spacing:-1.526px;color:#2B91AF;white-space:pre">18</div>
<div style="left:215.00px;top:269.5px;height:24px;line-height:24px;font-family:'Liberation Mono', monospace;font-size:18.2px;letter-spacing:-0.686px;color:#000000;white-space:pre">            </div>
<div style="left:337.81px;top:269.5px;height:24px;line-height:24px;font-family:'Liberation Mono', monospace;font-size:18.2px;letter-spacing:-0.686px;color:#2B91AF;white-space:pre">MovieDB</div>
<div style="left:409.45px;top:269.5px;height:24px;line-height:24px;font-family:'Liberation Mono', monospace;font-size:18.2px;letter-spacing:-0.686px;color:#000000;white-space:pre"> movieDB = </div>
<div style="left:522.02px;top:269.5px;height:24px;line-height:24px;font-family:'Liberation Mono', monospace;font-size:18.2px;letter-spacing:-0.686px;color:#0000FF;white-space:pre">new</div>
<div style="left:552.72px;top:269.5px;height:24px;line-height:24px;font-family:'Liberation Mono', monospace;font-size:18.2px;letter-spacing:-0.686px;color:#000000;white-space:pre"> </div>
<div style="left:562.96px;top:269.5px;height:24px;line-height:24px;font-family:'Liberation Mono', monospace;font-size:18.2px;letter-spacing:-0.686px;color:#2B91AF;white-space:pre">MovieDB</div>
<div style="left:634.59px;top:269.5px;height:24px;line-height:24px;font-family:'Liberation Mono', monospace;font-size:18.2px;letter-spacing:-0.686px;color:#000000;white-space:pre">() { ID =1, Title=</div>
<div style="left:818.81px;top:269.5px;height:24px;line-height:24px;font-family:'Liberation Mono', monospace;font-size:18.2px;letter-spacing:-0.686px;color:#A31515;white-space:pre">"</div>
<div style="left:829.04px;top:269.5px;width:20.47px;height:24px;line-height:24px;font-family:'Liberation Mono', monospace;font-size:19.24px;color:#A31515;white-space:pre;text-align:left">战</div>
<div style="left:849.51px;top:269.5px;width:20.47px;height:24px;line-height:24px;font-family:'Liberation Mono', monospace;font-size:19.24px;color:#A31515;white-space:pre;text-align:left">争</div>
<div style="left:869.98px;top:269.5px;height:24px;line-height:24px;font-family:'Liberation Mono', monospace;font-size:18.2px;letter-spacing:-0.686px;color:#A31515;white-space:pre">"</div>
<div style="left:880.21px;top:269.5px;height:24px;line-height:24px;font-family:'Liberation Mono', monospace;font-size:18.2px;letter-spacing:-0.686px;color:#000000;white-space:pre">, Director=</div>
<div style="left:992.78px;top:269.5px;height:24px;line-height:24px;font-family:'Liberation Mono', monospace;font-size:18.2px;letter-spacing:-0.686px;color:#A31515;white-space:pre">"</div>
<div style="left:1003.02px;top:269.5px;width:20.47px;height:24px;line-height:24px;font-family:'Liberation Mono', monospace;font-size:19.24px;color:#A31515;white-space:pre;text-align:left">吴</div>
<div style="left:1023.49px;top:269.5px;width:20.47px;height:24px;line-height:24px;font-family:'Liberation Mono', monospace;font-size:19.24px;color:#A31515;white-space:pre;text-align:left">京</div>
<div style="left:1043.95px;top:269.5px;height:24px;line-height:24px;font-family:'Liberation Mono', monospace;font-size:18.2px;letter-spacing:-0.686px;color:#A31515;white-space:pre">"</div>
<div style="left:1054.19px;top:269.5px;height:24px;line-height:24px;font-family:'Liberation Mono', monospace;font-size:18.2px;letter-spacing:-0.686px;color:#000000;white-space:pre">, Date = </div>
<div style="left:1146.29px;top:269.5px;height:24px;line-height:24px;font-family:'Liberation Mono', monospace;font-size:18.2px;letter-spacing:-0.686px;color:#2B91AF;white-space:pre">DateTime</div>
<div style="left:1228.17px;top:269.5px;height:24px;line-height:24px;font-family:'Liberation Mono', monospace;font-size:18.2px;letter-spacing:-0.686px;color:#000000;white-space:pre">.Now};</div>
<div style="left:100px;top:295.3px;width:54px;height:25px;line-height:25px;text-align:right;font-family:'Liberation Mono', monospace;font-size:19.6px;letter-spacing:-1.526px;color:#2B91AF;white-space:pre">19</div>
<div style="left:215.00px;top:294.6px;height:24px;line-height:24px;font-family:'Liberation Mono', monospace;font-size:18.2px;letter-spacing:-0.686px;color:#000000;white-space:pre">            ViewData[</div>
<div style="left:429.91px;top:294.6px;height:24px;line-height:24px;font-family:'Liberation Mono', monospace;font-size:18.2px;letter-spacing:-0.686px;color:#A31515;white-space:pre">"name1"</div>
<div style="left:501.55px;top:294.6px;height:24px;line-height:24px;font-family:'Liberation Mono', monospace;font-size:18.2px;letter-spacing:-0.686px;color:#000000;white-space:pre">] = </div>
<div style="left:542.49px;top:294.6px;height:24px;line-height:24px;font-family:'Liberation Mono', monospace;font-size:18.2px;letter-spacing:-0.686px;color:#A31515;white-space:pre">"ViewData--</div>
<div style="left:655.06px;top:294.6px;width:20.47px;height:24px;line-height:24px;font-family:'Liberation Mono', monospace;font-size:19.24px;color:#A31515;white-space:pre;text-align:left">小</div>
<div style="left:675.53px;top:294.6px;width:20.47px;height:24px;line-height:24px;font-family:'Liberation Mono', monospace;font-size:19.24px;color:#A31515;white-space:pre;text-align:left">舒</div>
<div style="left:696.00px;top:294.6px;height:24px;line-height:24px;font-family:'Liberation Mono', monospace;font-size:18.2px;letter-spacing:-0.686px;color:#A31515;white-space:pre">"</div>
<div style="left:706.23px;top:294.6px;height:24px;line-height:24px;font-family:'Liberation Mono', monospace;font-size:18.2px;letter-spacing:-0.686px;color:#000000;white-space:pre">;</div>
<div style="left:100px;top:320.5px;width:54px;height:25px;line-height:25px;text-align:right;font-family:'Liberation Mono', monospace;font-size:19.6px;letter-spacing:-1.526px;color:#2B91AF;white-space:pre">20</div>
<div style="left:215.00px;top:319.8px;height:24px;line-height:24px;font-family:'Liberation Mono', monospace;font-size:18.2px;letter-spacing:-0.686px;color:#000000;white-space:pre">            ViewBag.name2 = </div>
<div style="left:501.55px;top:319.8px;height:24px;line-height:24px;font-family:'Liberation Mono', monospace;font-size:18.2px;letter-spacing:-0.686px;color:#A31515;white-space:pre">"ViewBag--</div>
<div style="left:603.89px;top:319.8px;width:20.47px;height:24px;line-height:24px;font-family:'Liberation Mono', monospace;font-size:19.24px;color:#A31515;white-space:pre;text-align:left">小</div>
<div style="left:624.36px;top:319.8px;width:20.47px;height:24px;line-height:24px;font-family:'Liberation Mono', monospace;font-size:19.24px;color:#A31515;white-space:pre;text-align:left">舒</div>
<div style="left:644.83px;top:319.8px;height:24px;line-height:24px;font-family:'Liberation Mono', monospace;font-size:18.2px;letter-spacing:-0.686px;color:#A31515;white-space:pre">"</div>
<div style="left:655.06px;top:319.8px;height:24px;line-height:24px;font-family:'Liberation Mono', monospace;font-size:18.2px;letter-spacing:-0.686px;color:#000000;white-space:pre">;</div>
<div style="left:100px;top:345.7px;width:54px;height:25px;line-height:25px;text-align:right;font-family:'Liberation Mono', monospace;font-size:19.6px;letter-spacing:-1.526px;color:#2B91AF;white-space:pre">21</div>
<div style="left:215.00px;top:345.0px;height:24px;line-height:24px;font-family:'Liberation Mono', monospace;font-size:18.2px;letter-spacing:-0.686px;color:#008000;white-space:pre">            //return View(); //</div>
<div style="left:532.25px;top:345.0px;width:20.47px;height:24px;line-height:24px;font-family:'Liberation Mono', monospace;font-size:19.24px;color:#008000;white-space:pre;text-align:left">默</div>
<div style="left:552.72px;top:345.0px;width:20.47px;height:24px;line-height:24px;font-family:'Liberation Mono', monospace;font-size:19.24px;color:#008000;white-space:pre;text-align:left">认</div>
<div style="left:573.19px;top:345.0px;width:20.47px;height:24px;line-height:24px;font-family:'Liberation Mono', monospace;font-size:19.24px;color:#008000;white-space:pre;text-align:left">返</div>
<div style="left:593.66px;top:345.0px;width:20.47px;height:24px;line-height:24px;font-family:'Liberation Mono', monospace;font-size:19.24px;color:#008000;white-space:pre;text-align:left">回</div>
<div style="left:614.13px;top:345.0px;width:20.47px;height:24px;line-height:24px;font-family:'Liberation Mono', monospace;font-size:19.24px;color:#008000;white-space:pre;text-align:left">和</div>
<div style="left:634.59px;top:345.0px;width:20.47px;height:24px;line-height:24px;font-family:'Liberation Mono', monospace;font-size:19.24px;color:#008000;white-space:pre;text-align:left">方</div>
<div style="left:655.06px;top:345.0px;width:20.47px;height:24px;line-height:24px;font-family:'Liberation Mono', monospace;font-size:19.24px;color:#008000;white-space:pre;text-align:left">法</div>
<div style="left:675.53px;top:345.0px;width:20.47px;height:24px;line-height:24px;font-family:'Liberation Mono', monospace;font-size:19.24px;color:#008000;white-space:pre;text-align:left">名</div>
<div style="left:696.00px;top:345.0px;width:20.47px;height:24px;line-height:24px;font-family:'Liberation Mono', monospace;font-size:19.24px;color:#008000;white-space:pre;text-align:left">同</div>
<div style="left:716.47px;top:345.0px;width:20.47px;height:24px;line-height:24px;font-family:'Liberation Mono', monospace;font-size:19.24px;color:#008000;white-space:pre;text-align:left">名</div>
<div style="left:736.93px;top:345.0px;width:20.47px;height:24px;line-height:24px;font-family:'Liberation Mono', monospace;font-size:19.24px;color:#008000;white-space:pre;text-align:left">的</div>
<div style="left:757.40px;top:345.0px;width:20.47px;height:24px;line-height:24px;font-family:'Liberation Mono', monospace;font-size:19.24px;color:#008000;white-space:pre;text-align:left">页</div>
<div style="left:777.87px;top:345.0px;width:20.47px;height:24px;line-height:24px;font-family:'Liberation Mono', monospace;font-size:19.24px;color:#008000;white-space:pre;text-align:left">面</div>
<div style="left:100px;top:370.8px;width:54px;height:25px;line-height:25px;text-align:right;font-family:'Liberation Mono', monospace;font-size:19.6px;letter-spacing:-1.526px;color:#2B91AF;white-space:pre">22</div>
<div style="left:215.00px;top:370.1px;height:24px;line-height:24px;font-family:'Liberation Mono', monospace;font-size:18.2px;letter-spacing:-0.686px;color:#008000;white-space:pre">            //return View("Privacy");  //</div>
<div style="left:634.59px;top:370.1px;width:20.47px;height:24px;line-height:24px;font-family:'Liberation Mono', monospace;font-size:19.24px;color:#008000;white-space:pre;text-align:left">返</div>
<div style="left:655.06px;top:370.1px;width:20.47px;height:24px;line-height:24px;font-family:'Liberation Mono', monospace;font-size:19.24px;color:#008000;white-space:pre;text-align:left">回</div>
<div style="left:675.53px;top:370.1px;width:20.47px;height:24px;line-height:24px;font-family:'Liberation Mono', monospace;font-size:19.24px;color:#008000;white-space:pre;text-align:left">指</div>
<div style="left:696.00px;top:370.1px;width:20.47px;height:24px;line-height:24px;font-family:'Liberation Mono', monospace;font-size:19.24px;color:#008000;white-space:pre;text-align:left">定</div>
<div style="left:716.47px;top:370.1px;height:24px;line-height:24px;font-family:'Liberation Mono', monospace;font-size:18.2px;letter-spacing:-0.686px;color:#008000;white-space:pre">Privacy</div>
<div style="left:788.10px;top:370.1px;width:20.47px;height:24px;line-height:24px;font-family:'Liberation Mono', monospace;font-size:19.24px;color:#008000;white-space:pre;text-align:left">的</div>
<div style="left:808.57px;top:370.1px;width:20.47px;height:24px;line-height:24px;font-family:'Liberation Mono', monospace;font-size:19.24px;color:#008000;white-space:pre;text-align:left">页</div>
<div style="left:829.04px;top:370.1px;width:20.47px;height:24px;line-height:24px;font-family:'Liberation Mono', monospace;font-size:19.24px;color:#008000;white-space:pre;text-align:left">面</div>
<div style="left:100px;top:396.0px;width:54px;height:25px;line-height:25px;text-align:right;font-family:'Liberation Mono', monospace;font-size:19.6px;letter-spacing:-1.526px;color:#2B91AF;white-space:pre">23</div>
<div style="left:215.00px;top:395.3px;height:24px;line-height:24px;font-family:'Liberation Mono', monospace;font-size:18.2px;letter-spacing:-0.686px;color:#000000;white-space:pre">            </div>
<div style="left:337.81px;top:395.3px;height:24px;line-height:24px;font-family:'Liberation Mono', monospace;font-size:18.2px;letter-spacing:-0.686px;color:#8F08C4;white-space:pre">return</div>
<div style="left:399.21px;top:395.3px;height:24px;line-height:24px;font-family:'Liberation Mono', monospace;font-size:18.2px;letter-spacing:-0.686px;color:#000000;white-space:pre"> </div>
<div style="left:409.45px;top:395.3px;height:24px;line-height:24px;font-family:'Liberation Mono', monospace;font-size:18.2px;letter-spacing:-0.686px;color:#74531F;white-space:pre">View</div>
<div style="left:450.38px;top:395.3px;height:24px;line-height:24px;font-family:'Liberation Mono', monospace;font-size:18.2px;letter-spacing:-0.686px;color:#000000;white-space:pre">(movieDB); </div>
<div style="left:562.96px;top:395.3px;height:24px;line-height:24px;font-family:'Liberation Mono', monospace;font-size:18.2px;letter-spacing:-0.686px;color:#008000;white-space:pre">//</div>
<div style="left:583.42px;top:395.3px;width:20.47px;height:24px;line-height:24px;font-family:'Liberation Mono', monospace;font-size:19.24px;color:#008000;white-space:pre;text-align:left">将</div>
<div style="left:603.89px;top:395.3px;height:24px;line-height:24px;font-family:'Liberation Mono', monospace;font-size:18.2px;letter-spacing:-0.686px;color:#008000;white-space:pre">movieDB</div>
<div style="left:675.53px;top:395.3px;width:20.47px;height:24px;line-height:24px;font-family:'Liberation Mono', monospace;font-size:19.24px;color:#008000;white-space:pre;text-align:left">对</div>
<div style="left:696.00px;top:395.3px;width:20.47px;height:24px;line-height:24px;font-family:'Liberation Mono', monospace;font-size:19.24px;color:#008000;white-space:pre;text-align:left">象</div>
<div style="left:716.47px;top:395.3px;width:20.47px;height:24px;line-height:24px;font-family:'Liberation Mono', monospace;font-size:19.24px;color:#008000;white-space:pre;text-align:left">的</div>
<div style="left:736.93px;top:395.3px;width:20.47px;height:24px;line-height:24px;font-family:'Liberation Mono', monospace;font-size:19.24px;color:#008000;white-space:pre;text-align:left">东</div>
<div style="left:757.40px;top:395.3px;width:20.47px;height:24px;line-height:24px;font-family:'Liberation Mono', monospace;font-size:19.24px;color:#008000;white-space:pre;text-align:left">西</div>
<div style="left:777.87px;top:395.3px;width:20.47px;height:24px;line-height:24px;font-family:'Liberation Mono', monospace;font-size:19.24px;color:#008000;white-space:pre;text-align:left">传</div>
<div style="left:798.34px;top:395.3px;width:20.47px;height:24px;line-height:24px;font-family:'Liberation Mono', monospace;font-size:19.24px;color:#008000;white-space:pre;text-align:left">入</div>
<div style="left:818.81px;top:395.3px;height:24px;line-height:24px;font-family:'Liberation Mono', monospace;font-size:18.2px;letter-spacing:-0.686px;color:#008000;white-space:pre">Index</div>
<div style="left:869.98px;top:395.3px;width:20.47px;height:24px;line-height:24px;font-family:'Liberation Mono', monospace;font-size:19.24px;color:#008000;white-space:pre;text-align:left">页</div>
<div style="left:890.44px;top:395.3px;width:20.47px;height:24px;line-height:24px;font-family:'Liberation Mono', monospace;font-size:19.24px;color:#008000;white-space:pre;text-align:left">面</div>
<div style="left:100px;top:421.2px;width:54px;height:25px;line-height:25px;text-align:right;font-family:'Liberation Mono', monospace;font-size:19.6px;letter-spacing:-1.526px;color:#2B91AF;white-space:pre">24</div>
<div style="left:215.00px;top:420.5px;height:24px;line-height:24px;font-family:'Liberation Mono', monospace;font-size:18.2px;letter-spacing:-0.686px;color:#008000;white-space:pre">            //return Json(movieDB);</div>
<div style="left:100px;top:446.4px;width:54px;height:25px;line-height:25px;text-align:right;font-family:'Liberation Mono', monospace;font-size:19.6px;letter-spacing:-1.526px;color:#2B91AF;white-space:pre">25</div>
<div style="left:215.00px;top:445.7px;height:24px;line-height:24px;font-family:'Liberation Mono', monospace;font-size:18.2px;letter-spacing:-0.686px;color:#000000;white-space:pre">        }</div>
<div style="left:100px;top:471.5px;width:54px;height:25px;line-height:25px;text-align:right;font-family:'Liberation Mono', monospace;font-size:19.6px;letter-spacing:-1.526px;color:#2B91AF;white-space:pre">26</div>
<div style="left:218.00px;top:495.9px;height:23px;line-height:23px;font-family:'Liberation Mono', monospace;font-size:17.5px;letter-spacing:-0.600px;color:#A0A0A0;white-space:pre">        0 </div>
<div style="left:317.00px;top:495.9px;width:19.80px;height:23px;line-height:23px;font-family:'Liberation Mono', monospace;font-size:18.61px;color:#A0A0A0;white-space:pre;text-align:left">个</div>
<div style="left:336.80px;top:495.9px;width:19.80px;height:23px;line-height:23px;font-family:'Liberation Mono', monospace;font-size:18.61px;color:#A0A0A0;white-space:pre;text-align:left">引</div>
<div style="left:356.60px;top:495.9px;width:19.80px;height:23px;line-height:23px;font-family:'Liberation Mono', monospace;font-size:18.61px;color:#A0A0A0;white-space:pre;text-align:left">用</div>
<div style="left:100px;top:520.6px;width:54px;height:25px;line-height:25px;text-align:right;font-family:'Liberation Mono', monospace;font-size:19.6px;letter-spacing:-1.526px;color:#2B91AF;white-space:pre">27</div>
<div style="left:215.00px;top:519.9px;height:24px;line-height:24px;font-family:'Liberation Mono', monospace;font-size:18.2px;letter-spacing:-0.686px;color:#0000FF;white-space:pre">        public</div>
<div style="left:358.28px;top:519.9px;height:24px;line-height:24px;font-family:'Liberation Mono', monospace;font-size:18.2px;letter-spacing:-0.686px;color:#000000;white-space:pre"> </div>
<div style="left:368.51px;top:519.9px;height:24px;line-height:24px;font-family:'Liberation Mono', monospace;font-size:18.2px;letter-spacing:-0.686px;color:#2B91AF;white-space:pre">IActionResult</div>
<div style="left:501.55px;top:519.9px;height:24px;line-height:24px;font-family:'Liberation Mono', monospace;font-size:18.2px;letter-spacing:-0.686px;color:#000000;white-space:pre"> </div>
<div style="left:511.79px;top:519.9px;height:24px;line-height:24px;font-family:'Liberation Mono', monospace;font-size:18.2px;letter-spacing:-0.686px;color:#74531F;white-space:pre">Privacy</div>
<div style="left:583.42px;top:519.9px;height:24px;line-height:24px;font-family:'Liberation Mono', monospace;font-size:18.2px;letter-spacing:-0.686px;color:#000000;white-space:pre">()</div>
<div style="left:100px;top:545.8px;width:54px;height:25px;line-height:25px;text-align:right;font-family:'Liberation Mono', monospace;font-size:19.6px;letter-spacing:-1.526px;color:#2B91AF;white-space:pre">28</div>
<div style="left:215.00px;top:545.1px;height:24px;line-height:24px;font-family:'Liberation Mono', monospace;font-size:18.2px;letter-spacing:-0.686px;color:#000000;white-space:pre">        {</div>
<div style="left:100px;top:570.9px;width:54px;height:25px;line-height:25px;text-align:right;font-family:'Liberation Mono', monospace;font-size:19.6px;letter-spacing:-1.526px;color:#2B91AF;white-space:pre">29</div>
<div style="left:215.00px;top:570.2px;height:24px;line-height:24px;font-family:'Liberation Mono', monospace;font-size:18.2px;letter-spacing:-0.686px;color:#000000;white-space:pre">            </div>
<div style="left:337.81px;top:570.2px;height:24px;line-height:24px;font-family:'Liberation Mono', monospace;font-size:18.2px;letter-spacing:-0.686px;color:#8F08C4;white-space:pre">return</div>
<div style="left:399.21px;top:570.2px;height:24px;line-height:24px;font-family:'Liberation Mono', monospace;font-size:18.2px;letter-spacing:-0.686px;color:#000000;white-space:pre"> </div>
<div style="left:409.45px;top:570.2px;height:24px;line-height:24px;font-family:'Liberation Mono', monospace;font-size:18.2px;letter-spacing:-0.686px;color:#74531F;white-space:pre">View</div>
<div style="left:450.38px;top:570.2px;height:24px;line-height:24px;font-family:'Liberation Mono', monospace;font-size:18.2px;letter-spacing:-0.686px;color:#000000;white-space:pre">();</div>
<div style="left:100px;top:596.1px;width:54px;height:25px;line-height:25px;text-align:right;font-family:'Liberation Mono', monospace;font-size:19.6px;letter-spacing:-1.526px;color:#2B91AF;white-space:pre">30</div>
<div style="left:215.00px;top:595.4px;height:24px;line-height:24px;font-family:'Liberation Mono', monospace;font-size:18.2px;letter-spacing:-0.686px;color:#000000;white-space:pre">        }</div>
<div style="left:100px;top:621.3px;width:54px;height:25px;line-height:25px;text-align:right;font-family:'Liberation Mono', monospace;font-size:19.6px;letter-spacing:-1.526px;color:#2B91AF;white-space:pre">31</div>
<div style="left:100px;top:646.5px;width:54px;height:25px;line-height:25px;text-align:right;font-family:'Liberation Mono', monospace;font-size:19.6px;letter-spacing:-1.526px;color:#2B91AF;white-space:pre">32</div>
<div style="left:215.00px;top:645.8px;height:24px;line-height:24px;font-family:'Liberation Mono', monospace;font-size:18.2px;letter-spacing:-0.686px;color:#000000;white-space:pre">        [</div>
<div style="left:307.11px;top:645.8px;height:24px;line-height:24px;font-family:'Liberation Mono', monospace;font-size:18.2px;letter-spacing:-0.686px;color:#2B91AF;white-space:pre">ResponseCache</div>
<div style="left:440.15px;top:645.8px;height:24px;line-height:24px;font-family:'Liberation Mono', monospace;font-size:18.2px;letter-spacing:-0.686px;color:#000000;white-space:pre">(Duration = 0, Location = </div>
<div style="left:706.23px;top:645.8px;height:24px;line-height:24px;font-family:'Liberation Mono', monospace;font-size:18.2px;letter-spacing:-0.686px;color:#2B91AF;white-space:pre">ResponseCacheLocation</div>
<div style="left:921.15px;top:645.8px;height:24px;line-height:24px;font-family:'Liberation Mono', monospace;font-size:18.2px;letter-spacing:-0.686px;color:#000000;white-space:pre">.None, NoStore = </div>
<div style="left:1095.12px;top:645.8px;height:24px;line-height:24px;font-family:'Liberation Mono', monospace;font-size:18.2px;letter-spacing:-0.686px;color:#0000FF;white-space:pre">true</div>
<div style="left:1136.06px;top:645.8px;height:24px;line-height:24px;font-family:'Liberation Mono', monospace;font-size:18.2px;letter-spacing:-0.686px;color:#000000;white-space:pre">)]</div>
<div style="left:218.00px;top:671.2px;height:23px;line-height:23px;font-family:'Liberation Mono', monospace;font-size:17.5px;letter-spacing:-0.600px;color:#A0A0A0;white-space:pre">        0 </div>
<div style="left:317.00px;top:671.2px;width:19.80px;height:23px;line-height:23px;font-family:'Liberation Mono', monospace;font-size:18.61px;color:#A0A0A0;white-space:pre;text-align:left">个</div>
<div style="left:336.80px;top:671.2px;width:19.80px;height:23px;line-height:23px;font-family:'Liberation Mono', monospace;font-size:18.61px;color:#A0A0A0;white-space:pre;text-align:left">引</div>
<div style="left:356.60px;top:671.2px;width:19.80px;height:23px;line-height:23px;font-family:'Liberation Mono', monospace;font-size:18.61px;color:#A0A0A0;white-space:pre;text-align:left">用</div>
<div style="left:100px;top:696.0px;width:54px;height:25px;line-height:25px;text-align:right;font-family:'Liberation Mono', monospace;font-size:19.6px;letter-spacing:-1.526px;color:#2B91AF;white-space:pre">33</div>
<div style="left:215.00px;top:695.3px;height:24px;line-height:24px;font-family:'Liberation Mono', monospace;font-size:18.2px;letter-spacing:-0.686px;color:#0000FF;white-space:pre">        public</div>
<div style="left:358.28px;top:695.3px;height:24px;line-height:24px;font-family:'Liberation Mono', monospace;font-size:18.2px;letter-spacing:-0.686px;color:#000000;white-space:pre"> </div>
<div style="left:368.51px;top:695.3px;height:24px;line-height:24px;font-family:'Liberation Mono', monospace;font-size:18.2px;letter-spacing:-0.686px;color:#2B91AF;white-space:pre">IActionResult</div>
<div style="left:501.55px;top:695.3px;height:24px;line-height:24px;font-family:'Liberation Mono', monospace;font-size:18.2px;letter-spacing:-0.686px;color:#000000;white-space:pre"> </div>
<div style="left:511.79px;top:695.3px;height:24px;line-height:24px;font-family:'Liberation Mono', monospace;font-size:18.2px;letter-spacing:-0.686px;color:#74531F;white-space:pre">Error</div>
<div style="left:562.96px;top:695.3px;height:24px;line-height:24px;font-family:'Liberation Mono', monospace;font-size:18.2px;letter-spacing:-0.686px;color:#000000;white-space:pre">()</div>
<div style="left:100px;top:721.2px;width:54px;height:25px;line-height:25px;text-align:right;font-family:'Liberation Mono', monospace;font-size:19.6px;letter-spacing:-1.526px;color:#2B91AF;white-space:pre">34</div>
<div style="left:215.00px;top:720.5px;height:24px;line-height:24px;font-family:'Liberation Mono', monospace;font-size:18.2px;letter-spacing:-0.686px;color:#000000;white-space:pre">        {</div>
<div style="left:100px;top:746.3px;width:54px;height:25px;line-height:25px;text-align:right;font-family:'Liberation Mono', monospace;font-size:19.6px;letter-spacing:-1.526px;color:#2B91AF;white-space:pre">35</div>
<div style="left:215.00px;top:745.6px;height:24px;line-height:24px;font-family:'Liberation Mono', monospace;font-size:18.2px;letter-spacing:-0.686px;color:#000000;white-space:pre">            </div>
<div style="left:337.81px;top:745.6px;height:24px;line-height:24px;font-family:'Liberation Mono', monospace;font-size:18.2px;letter-spacing:-0.686px;color:#8F08C4;white-space:pre">return</div>
<div style="left:399.21px;top:745.6px;height:24px;line-height:24px;font-family:'Liberation Mono', monospace;font-size:18.2px;letter-spacing:-0.686px;color:#000000;white-space:pre"> </div>
<div style="left:409.45px;top:745.6px;height:24px;line-height:24px;font-family:'Liberation Mono', monospace;font-size:18.2px;letter-spacing:-0.686px;color:#74531F;white-space:pre">View</div>
<div style="left:450.38px;top:745.6px;height:24px;line-height:24px;font-family:'Liberation Mono', monospace;font-size:18.2px;letter-spacing:-0.686px;color:#000000;white-space:pre">(</div>
<div style="left:460.62px;top:745.6px;height:24px;line-height:24px;font-family:'Liberation Mono', monospace;font-size:18.2px;letter-spacing:-0.686px;color:#0000FF;white-space:pre">new</div>
<div style="left:491.32px;top:745.6px;height:24px;line-height:24px;font-family:'Liberation Mono', monospace;font-size:18.2px;letter-spacing:-0.686px;color:#000000;white-space:pre"> </div>
<div style="left:501.55px;top:745.6px;height:24px;line-height:24px;font-family:'Liberation Mono', monospace;font-size:18.2px;letter-spacing:-0.686px;color:#2B91AF;white-space:pre">ErrorViewModel</div>
<div style="left:644.83px;top:745.6px;height:24px;line-height:24px;font-family:'Liberation Mono', monospace;font-size:18.2px;letter-spacing:-0.686px;color:#000000;white-space:pre"> { RequestId = </div>
<div style="left:798.34px;top:745.6px;height:24px;line-height:24px;font-family:'Liberation Mono', monospace;font-size:18.2px;letter-spacing:-0.686px;color:#2B91AF;white-space:pre">Activity</div>
<div style="left:880.21px;top:745.6px;height:24px;line-height:24px;font-family:'Liberation Mono', monospace;font-size:18.2px;letter-spacing:-0.686px;color:#000000;white-space:pre">.Current?.Id ?? HttpContext.TraceIdentifier });</div>
<div style="left:100px;top:771.5px;width:54px;height:25px;line-height:25px;text-align:right;font-family:'Liberation Mono', monospace;font-size:19.6px;letter-spacing:-1.526px;color:#2B91AF;white-space:pre">36</div>
<div style="left:215.00px;top:770.8px;height:24px;line-height:24px;font-family:'Liberation Mono', monospace;font-size:18.2px;letter-spacing:-0.686px;color:#000000;white-space:pre">        }</div>
<div style="left:100px;top:796.7px;width:54px;height:25px;line-height:25px;text-align:right;font-family:'Liberation Mono', monospace;font-size:19.6px;letter-spacing:-1.526px;color:#2B91AF;white-space:pre">37</div>
<div style="left:215.00px;top:796.0px;height:24px;line-height:24px;font-family:'Liberation Mono', monospace;font-size:18.2px;letter-spacing:-0.686px;color:#000000;white-space:pre">    }</div>
<div style="left:100px;top:821.8px;width:54px;height:25px;line-height:25px;text-align:right;font-family:'Liberation Mono', monospace;font-size:19.6px;letter-spacing:-1.526px;color:#2B91AF;white-space:pre">38</div>
<div style="left:215.00px;top:821.1px;height:24px;line-height:24px;font-family:'Liberation Mono', monospace;font-size:18.2px;letter-spacing:-0.686px;color:#000000;white-space:pre">}</div>
<div style="left:47px;top:958px;width:1576px;height:26px;background:#F5F5F5;"></div>
<div style="left:47px;top:958px;width:88px;height:24px;background:#FFFFFF;border:1px solid #CCCEDB;"></div>
<div id="t24" style="left:50.5px;top:959.5px;height:24px;line-height:24px;font-family:'Liberation Sans', sans-serif;font-size:17.88px;color:#1E1E1E;font-weight:normal;white-space:pre;letter-spacing:-0.426px;">105 %</div>
<svg style="left:124px;top:970px" width="9" height="5" viewBox="0 0 9 5"><path d="M0 0 H9 L4.5 5 Z" fill="#6D6D6D"/></svg>
<div style="left:137px;top:959px;width:25px;height:25px;background:#EEEEF2;"></div>
<svg style="left:139px;top:961px" width="22" height="22" viewBox="0 0 22 22"><path d="M9 17 Q8.5 13 6.5 11 Q4.5 8.5 5 5.5 Q6 1 11.5 1 Q17 1 18 5.5 Q18.5 8.5 16.5 11 Q14.5 13 14 17 Z" fill="#EDE6F7" stroke="#7B3FC4" stroke-width="1.6"/><path d="M9.5 17.5 H13.5 M11.5 8 V13 M8.5 5.5 L9.5 6.5 M14.5 5.5 L13.5 6.5 M11.5 3.5 V4.8" stroke="#7B3FC4" stroke-width="1.3"/><path d="M1.5 12.5 Q0.5 15 2.5 16.5 L9 21.5 L10.5 20 L4.5 14.5 Q5.5 12 4 11 Q3 10.5 2 11 L3.5 12.8 Z" fill="#7B3FC4"/></svg>
<svg style="left:197px;top:962px" width="17" height="17" viewBox="0 0 17 17"><circle cx="8.5" cy="8.5" r="8.5" fill="#1F8F3A"/><path d="M4.5 8.8 L7.5 11.8 L12.5 5.8" fill="none" stroke="#FFFFFF" stroke-width="2"/></svg>
<div id="t25" style="left:223px;top:960.0px;height:23px;line-height:23px;font-family:'Liberation Sans', sans-serif;font-size:16.81px;color:#1E1E1E;font-weight:normal;white-space:pre;letter-spacing:0.000px;">未找到相关问题</div>
<div style="left:438.5px;top:962px;width:1.5px;height:19px;background:#CCCEDB;"></div>
<svg style="left:458px;top:960px" width="26" height="24" viewBox="0 0 26 24"><path d="M21.5 2.5 L15.5 9" stroke="#3A3A3A" stroke-width="3.4" stroke-linecap="round"/><path d="M21.3 2.7 L15.7 8.8" stroke="#D8D8D8" stroke-width="1"/><path d="M3.6 12.8 L11.2 8.3 L15.6 11.8 L10.8 20.3 Z" fill="#EFE3C8" stroke="#A87E12" stroke-width="1.7" stroke-linejoin="round"/><path d="M8.5 10.2 L13.3 16 M10.8 9 L14.8 13.5" stroke="#A87E12" stroke-width="1.3"/><path d="M5.4 3.6 L6.2 5.5 L8.1 6.3 L6.2 7.1 L5.4 9 L4.6 7.1 L2.7 6.3 L4.6 5.5 Z" fill="#0A6CC9"/><path d="M11 1 L11.8 2.7 L13.5 3.5 L11.8 4.3 L11 6 L10.2 4.3 L8.5 3.5 L10.2 2.7 Z" fill="#4A3FB0"/></svg>
<svg style="left:487px;top:968px" width="10" height="6" viewBox="0 0 10 6"><path d="M0 0 H10 L5 6 Z" fill="#1E1E1E"/></svg>
<svg style="left:542px;top:966px" width="8" height="12" viewBox="0 0 8 12"><path d="M8 0 V12 L0 6 Z" fill="#868999"/></svg>
<div style="left:558px;top:966px;width:673px;height:12px;background:#C2C3C9;"></div>
<svg style="left:1290px;top:966px" width="8" height="12" viewBox="0 0 8 12"><path d="M0 0 V12 L8 6 Z" fill="#868999"/></svg>
<div id="t26" style="left:1340px;top:959.5px;height:24px;line-height:24px;font-family:'Liberation Sans', sans-serif;font-size:17.58px;color:#1E1E1E;font-weight:normal;white-space:pre;letter-spacing:-0.592px;">行: 27</div>
<div id="t27" style="left:1413px;top:959.5px;height:24px;line-height:24px;font-family:'Liberation Sans', sans-serif;font-size:17.7px;color:#1E1E1E;font-weight:normal;white-space:pre;letter-spacing:-0.573px;">字符: 39</div>
<div id="t28" style="left:1503.5px;top:959.5px;height:24px;line-height:24px;font-family:'Liberation Sans', sans-serif;font-size:16.31px;color:#1E1E1E;font-weight:normal;white-space:pre;letter-spacing:0.000px;">空格</div>
<div id="t29" style="left:1568px;top:959.5px;height:24px;line-height:24px;font-family:'Liberation Sans', sans-serif;font-size:16.77px;color:#1E1E1E;font-weight:normal;white-space:pre;letter-spacing:-1.365px;">CRLF</div>
<div style="left:1623px;top:113px;width:384px;height:871px;background:#E2E2E4;"></div>
<div style="left:1623px;top:145px;width:384px;height:1.5px;background:#EDEDF0;"></div>
<div id="t30" style="left:1635px;top:116.5px;height:25px;line-height:25px;font-family:'Liberation Sans', sans-serif;font-size:17.22px;color:#1E1E1E;font-weight:normal;white-space:pre;letter-spacing:0.000px;">选项卡</div>
<svg style="left:1698px;top:122px" width="15" height="15" viewBox="0 0 15 15"><circle cx="7.5" cy="7.5" r="5.6" fill="none" stroke="#6F6F6F" stroke-width="3" stroke-dasharray="1.9 1.6"/><circle cx="7.5" cy="7.5" r="4.2" fill="none" stroke="#6F6F6F" stroke-width="2.6"/></svg>
<div id="t31" style="left:1635px;top:154.5px;height:21px;line-height:21px;font-family:'Liberation Sans', sans-serif;font-size:15.43px;color:#6D6D6D;font-weight:normal;white-space:pre;letter-spacing:0.000px;">杂项文件</div>
<div id="t32" style="left:1642px;top:181.5px;height:25px;line-height:25px;font-family:'Liberation Sans', sans-serif;font-size:19.03px;color:#717171;font-weight:normal;white-space:pre;letter-spacing:-0.264px;">IActionResult [从元数据]</div>
<svg style="left:1852px;top:185px" width="13" height="17" viewBox="0 0 13 17"><path d="M3 8 V5 A3.5 3.5 0 0 1 10 5 V8" fill="none" stroke="#424242" stroke-width="1.6"/><rect x="1" y="8" width="11" height="8.5" fill="none" stroke="#424242" stroke-width="1.6"/><rect x="5.5" y="11" width="2" height="3" fill="#424242"/></svg>
<svg style="left:1941px;top:186px" width="17" height="17" viewBox="0 0 17 17"><path d="M1 2 L8 8" stroke="#424242" stroke-width="1.6"/><rect x="3" y="8" width="13" height="8" fill="#424242"/><rect x="6" y="5" width="7" height="3" fill="#424242"/></svg>
<svg style="left:1971px;top:188px" width="14" height="14" viewBox="0 0 14 14"><path d="M1 1 L13 13 M13 1 L1 13" stroke="#424242" stroke-width="1.8"/></svg>
<div style="left:1635px;top:217px;width:360px;height:1.8px;background:#CCCEDB;"></div>
<div id="t33" style="left:1635px;top:223.0px;height:24px;line-height:24px;font-family:'Liberation Sans', sans-serif;font-size:17.89px;color:#6D6D6D;font-weight:normal;white-space:pre;letter-spacing:-0.455px;">WebMvc</div>
<div id="t34" style="left:1642px;top:252.0px;height:25px;line-height:25px;font-family:'Liberation Sans', sans-serif;font-size:19.38px;color:#1E1E1E;font-weight:normal;white-space:pre;letter-spacing:-0.054px;">_ValidationScriptsPartial.cshtml</div>
<div id="t35" style="left:1642px;top:283.8px;height:25px;line-height:25px;font-family:'Liberation Sans', sans-serif;font-size:19.11px;color:#1E1E1E;font-weight:normal;white-space:pre;letter-spacing:-0.216px;">20221009080124_CreateSchema.cs</div>
<div id="t36" style="left:1642px;top:316.1px;height:25px;line-height:25px;font-family:'Liberation Sans', sans-serif;font-size:19.44px;color:#1E1E1E;font-weight:normal;white-space:pre;letter-spacing:-0.031px;">appsettings.json</div>
<div id="t37" style="left:1642px;top:347.7px;height:25px;line-height:25px;font-family:'Liberation Sans', sans-serif;font-size:19.07px;color:#1E1E1E;font-weight:normal;white-space:pre;letter-spacing:-0.218px;">Create.cshtml</div>
<div style="left:1635px;top:377px;width:360px;height:32px;background:#0067C0;"></div>
<div id="t38" style="left:1642px;top:380.0px;height:25px;line-height:25px;font-family:'Liberation Sans', sans-serif;font-size:19.14px;color:#FFFFFF;font-weight:bold;white-space:pre;letter-spacing:-0.198px;">HomeController.cs</div>
<div id="t39" style="left:1642px;top:411.8px;height:25px;line-height:25px;font-family:'Liberation Sans', sans-serif;font-size:19.28px;color:#1E1E1E;font-weight:normal;white-space:pre;letter-spacing:-0.112px;">Index.cshtml</div>
<div id="t40" style="left:1642px;top:443.9px;height:25px;line-height:25px;font-family:'Liberation Sans', sans-serif;font-size:19.28px;color:#1E1E1E;font-weight:normal;white-space:pre;letter-spacing:-0.112px;">Index.cshtml</div>
<div id="t41" style="left:1642px;top:475.9px;height:25px;line-height:25px;font-family:'Liberation Sans', sans-serif;font-size:18.93px;color:#1E1E1E;font-weight:normal;white-space:pre;letter-spacing:-0.330px;">MovieDB.cs</div>
<div id="t42" style="left:1642px;top:507.9px;height:25px;line-height:25px;font-family:'Liberation Sans', sans-serif;font-size:19.26px;color:#1E1E1E;font-weight:normal;white-space:pre;letter-spacing:-0.131px;">MovieDBContext.cs</div>
<div id="t43" style="left:1642px;top:540.3px;height:25px;line-height:25px;font-family:'Liberation Sans', sans-serif;font-size:19.35px;color:#1E1E1E;font-weight:normal;white-space:pre;letter-spacing:-0.073px;">MoviesController.cs</div>
<div id="t44" style="left:1642px;top:572.5px;height:25px;line-height:25px;font-family:'Liberation Sans', sans-serif;font-size:19.4px;color:#1E1E1E;font-weight:normal;white-space:pre;letter-spacing:-0.055px;">MyContextModelSnapshot.cs</div>
<div id="t45" style="left:1642px;top:604.5px;height:25px;line-height:25px;font-family:'Liberation Sans', sans-serif;font-size:19.1px;color:#1E1E1E;font-weight:normal;white-space:pre;letter-spacing:-0.196px;">Privacy1.cshtml</div>
<div id="t46" style="left:1642px;top:636.0px;height:25px;line-height:25px;font-family:'Liberation Sans', sans-serif;font-size:19.03px;color:#1E1E1E;font-weight:normal;white-space:pre;letter-spacing:-0.258px;">Program.cs</div>
<div id="t47" style="left:1642px;top:668.5px;height:25px;line-height:25px;font-family:'Liberation Sans', sans-serif;font-size:19.36px;color:#1E1E1E;font-weight:normal;white-space:pre;letter-spacing:-0.080px;">WebMvc.csproj</div>
<div id="t48" style="left:1635px;top:708.9px;height:21px;line-height:21px;font-family:'Liberation Sans', sans-serif;font-size:15.43px;color:#6D6D6D;font-weight:normal;white-space:pre;letter-spacing:0.000px;">杂项文件</div>
<div id="t49" style="left:1642px;top:735.8px;height:25px;line-height:25px;font-family:'Liberation Sans', sans-serif;font-size:19.25px;color:#1E1E1E;font-weight:normal;white-space:pre;letter-spacing:-0.141px;">20221009060743_xiaoShu@qq.com.cs</div>
<div id="t50" style="left:1642px;top:768.1px;height:25px;line-height:25px;font-family:'Liberation Sans', sans-serif;font-size:19.24px;color:#1E1E1E;font-weight:normal;white-space:pre;letter-spacing:-0.133px;">20221009060951_C...IdentitySchema.cs</div>
<div id="t51" style="left:1642px;top:800.5px;height:25px;line-height:25px;font-family:'Liberation Sans', sans-serif;font-size:19.5px;color:#1E1E1E;font-weight:normal;white-space:pre;letter-spacing:0.045px;">20221009061041_inin-Mig.cs</div>
<div style="left:2007px;top:113px;width:10px;height:871px;background:#EEEEF2;"></div>
<div style="left:2016px;top:110px;width:493px;height:788px;background:#EEEEF2;border:2px solid #CCCEDB;"></div>
<div id="t52" style="left:2024px;top:116.0px;height:25px;line-height:25px;font-family:'Liberation Sans', sans-serif;font-size:17.55px;color:#1E1E1E;font-weight:normal;white-space:pre;letter-spacing:0.000px;">解决方案资源管理器</div>
<svg style="left:2198px;top:123px" width="224" height="9" viewBox="0 0 224 9"><defs><pattern id="gp1" x="0" y="0" width="6" height="6.2" patternUnits="userSpaceOnUse"><rect x="0" y="0" width="1.8" height="1.8" fill="#A2A2AA"/><rect x="3" y="3.1" width="1.8" height="1.8" fill="#A2A2AA"/></pattern></defs><rect x="0" y="0" width="224" height="8.2" fill="url(#gp1)"/></svg>
<svg style="left:2435px;top:123px" width="12" height="7" viewBox="0 0 12 7"><path d="M0 0 H12 L6 7 Z" fill="#1E1E1E"/></svg>
<svg style="left:2460px;top:118px" width="12" height="17" viewBox="0 0 12 17"><path d="M2 1 H10 M3.5 1 V9 H1 V10.5 H11 V9 H8.5 V1 M6 10.5 V16.5" fill="none" stroke="#1E1E1E" stroke-width="1.6"/><rect x="6.5" y="2" width="2" height="7" fill="#1E1E1E"/></svg>
<svg style="left:2486px;top:121px" width="14" height="14" viewBox="0 0 14 14"><path d="M1 1 L13 13 M13 1 L1 13" stroke="#1E1E1E" stroke-width="1.8"/></svg>
<svg style="left:2031px;top:157px" width="20" height="20" viewBox="0 0 20 20"><circle cx="10" cy="10" r="8.6" fill="none" stroke="#C3C3C3" stroke-width="1.4"/><path d="M14.5 10 H5.5 M9 6.5 L5.5 10 L9 13.5" fill="none" stroke="#C3C3C3" stroke-width="1.4"/></svg>
<svg style="left:2064px;top:157px" width="20" height="20" viewBox="0 0 20 20"><circle cx="10" cy="10" r="8.6" fill="none" stroke="#C3C3C3" stroke-width="1.4"/><path d="M5.5 10 H14.5 M11 6.5 L14.5 10 L11 13.5" fill="none" stroke="#C3C3C3" stroke-width="1.4"/></svg>
<svg style="left:2098px;top:156px" width="23" height="22" viewBox="0 0 23 22"><path d="M2 11 L11.5 2 L21 11 M5 9 V20 H9.5 V14 H13.5 V20 H18 V9" fill="none" stroke="#424242" stroke-width="1.8"/></svg>
<svg style="left:2130px;top:155px" width="25" height="25" viewBox="0 0 25 25"><rect x="10" y="1.5" width="13.5" height="15.5" fill="#FFFFFF" stroke="#1E1E1E" stroke-width="1.7"/><rect x="10" y="1.5" width="13.5" height="2.5" fill="#1E1E1E"/><rect x="13" y="6.5" width="8" height="1.3" fill="#1E1E1E"/><rect x="13" y="9.3" width="8" height="1.3" fill="#1E1E1E"/><rect x="13" y="12.1" width="8" height="1.3" fill="#1E1E1E"/><path d="M11.5 9.5 L5.5 15 L2.5 12.8 L1 13.6 V21.4 L2.5 22.2 L5.5 20 L11.5 25 L14 23.8 V10.7 Z" fill="#FFFFFF"/><path d="M11 11 L5.2 16.2 L2.6 14.2 L1.8 14.6 V20.4 L2.6 20.8 L5.2 18.8 L11 24 L13 23 V12 Z M11 14.5 V20.5 L7 17.5 Z" fill="#8661C5" fill-rule="evenodd"/></svg>
<div style="left:2164.5px;top:151px;width:1.6px;height:32px;background:#CCCEDB;"></div>
<svg style="left:2178px;top:152px" width="24" height="26" viewBox="0 0 24 26"><path d="M1 1 H7 L4 5 Z" fill="#1B6AC9"/><circle cx="14" cy="16" r="8" fill="none" stroke="#424242" stroke-width="1.8"/><path d="M14 11 V16 H18" fill="none" stroke="#424242" stroke-width="1.6"/><path d="M5 9 Q6 6 9 6" fill="none" stroke="#424242" stroke-width="1.5"/></svg>
<svg style="left:2214px;top:165px" width="9" height="6" viewBox="0 0 9 6"><path d="M0 0 H9 L4.5 5 Z" fill="#6D6D6D"/></svg>
<svg style="left:2234px;top:156px" width="23" height="23" viewBox="0 0 23 23"><path d="M3 10 A8.5 8.5 0 0 1 19 7 M20 13 A8.5 8.5 0 0 1 4 16" fill="none" stroke="#424242" stroke-width="1.8"/><path d="M19.5 2 V7.5 H14 M3.5 21 V15.5 H9" fill="none" stroke="#424242" stroke-width="1.8"/></svg>
<svg style="left:2268px;top:156px" width="24" height="23" viewBox="0 0 24 23"><path d="M5 4 V1 H22 V18 H19" fill="none" stroke="#424242" stroke-width="1.6"/><rect x="1" y="4" width="18" height="18" fill="#E6E6E6" stroke="#424242" stroke-width="1.7"/><rect x="5" y="12" width="10" height="1.8" fill="#424242"/></svg>
<svg style="left:2301px;top:156px" width="23" height="23" viewBox="0 0 23 23"><path d="M7 5 V1 H21 V15 H17" fill="#E6E6E6" stroke="#424242" stroke-width="1.6"/><rect x="1" y="6" width="16" height="16" fill="#E6E6E6" stroke="#424242" stroke-width="1.7"/><rect x="6" y="11" width="6" height="6" fill="#BEBEBE"/></svg>
<div style="left:2334.5px;top:151px;width:1.6px;height:32px;background:#CCCEDB;"></div>
<div style="left:2345px;top:150px;width:30px;height:30px;background:#EEEEF2;border:2px solid #3399FF;"></div>
<svg style="left:2352px;top:156px" width="20" height="22" viewBox="0 0 20 22"><rect x="1" y="1" width="4" height="4" fill="none" stroke="#1E1E1E" stroke-width="1.4"/><rect x="7" y="9" width="4" height="4" fill="none" stroke="#1E1E1E" stroke-width="1.4"/><rect x="14" y="16" width="4.5" height="4.5" fill="none" stroke="#1E1E1E" stroke-width="1.4"/><path d="M3 5 V11 H7 M9 13 V18 H14" fill="none" stroke="#1E1E1E" stroke-width="1.3"/></svg>
<svg style="left:2384px;top:165px" width="9" height="6" viewBox="0 0 9 6"><path d="M0 0 H9 L4.5 5 Z" fill="#6D6D6D"/></svg>
<div style="left:2402px;top:151px;width:1.6px;height:32px;background:#CCCEDB;"></div>
<svg style="left:2416px;top:156px" width="24" height="23" viewBox="0 0 24 23"><path d="M2 21 L12 11" stroke="#424242" stroke-width="3"/><path d="M11 12 Q9 5 15 2 Q19 1 21 2 L17 6 L18 8 L20 9 L23 5 Q24 9 22 12 Q18 15 13 13 Z" fill="#424242"/></svg>
<div style="left:2444px;top:150px;width:31px;height:30px;background:#EEEEF2;border:2px solid #3399FF;"></div>
<svg style="left:2450px;top:156px" width="24" height="22" viewBox="0 0 24 22"><rect x="1" y="12" width="16" height="5" fill="none" stroke="#1E1E1E" stroke-width="1.6"/><path d="M3 13 L12 10" stroke="#1E1E1E" stroke-width="1.5"/><path d="M17 6 L19 3 M20 9 L23 9 M15 3 L15 1" stroke="#D8A72A" stroke-width="1.4"/></svg>
<div style="left:2018px;top:189px;width:489px;height:29px;background:#FFFFFF;border:2px solid #CCCEDB;"></div>
<div id="t53" style="left:2025.6px;top:193.5px;height:25px;line-height:25px;font-family:'Liberation Sans', sans-serif;font-size:18.28px;color:#717171;font-weight:normal;white-space:pre;letter-spacing:0.000px;">搜索解决方案资源管理器(Ctrl+;)</div>
<svg style="left:2467px;top:196px" width="21" height="21" viewBox="0 0 21 21"><circle cx="13" cy="8" r="5.5" fill="none" stroke="#424242" stroke-width="2.6"/><path d="M9 12 L2 19" stroke="#424242" stroke-width="3.2" stroke-linecap="round"/></svg>
<svg style="left:2496px;top:204px" width="8" height="5" viewBox="0 0 8 5"><path d="M0 0 H8 L4 5 Z" fill="#424242"/></svg>
<div style="left:2018px;top:221px;width:493px;height:2px;background:#CCCEDB;"></div>
<div style="left:2018px;top:223px;width:493px;height:677px;background:#F5F5F5;"></div>
<svg style="left:2492px;top:234px" width="13" height="8" viewBox="0 0 13 8"><path d="M0 8 L6.5 0 L13 8 Z" fill="#868999"/></svg>
<div style="left:2491px;top:337px;width:14px;height:515px;background:#C2C3C9;"></div>
<svg style="left:2492px;top:882px" width="13" height="8" viewBox="0 0 13 8"><path d="M0 0 L6.5 8 L13 0 Z" fill="#868999"/></svg>
<div style="left:2018px;top:309px;width:467px;height:28px;background:#CCCEDB;"></div>
<svg style="left:2061px;top:231.1px" width="10" height="17" viewBox="0 0 10 17"><path d="M1 1.2 L8.6 8.3 L1 15.4 Z" fill="none" stroke="#1E1E1E" stroke-width="1.6" stroke-linejoin="miter"/></svg>
<svg style="left:2094px;top:229.6px" width="22" height="22" viewBox="0 0 22 22"><circle cx="11" cy="11" r="9.5" fill="none" stroke="#1B6AC9" stroke-width="1.8"/><path d="M1.5 11 H20.5 M11 1.5 V20.5 M11 1.5 Q4 11 11 20.5 M11 1.5 Q18 11 11 20.5 M3 6 H19 M3 16 H19" fill="none" stroke="#1B6AC9" stroke-width="1.3"/></svg>
<div id="t54" style="left:2124.5px;top:228.1px;height:25px;line-height:25px;font-family:'Liberation Sans', sans-serif;font-size:19.5px;color:#1E1E1E;font-weight:normal;white-space:pre;letter-spacing:0.023px;">wwwroot</div>
<svg style="left:2061px;top:259.1px" width="10" height="17" viewBox="0 0 10 17"><path d="M1 1.2 L8.6 8.3 L1 15.4 Z" fill="none" stroke="#1E1E1E" stroke-width="1.6" stroke-linejoin="miter"/></svg>
<svg style="left:2093px;top:258.6px" width="24" height="20" viewBox="0 0 24 20"><rect x="1" y="9" width="5" height="5" fill="none" stroke="#1E1E1E" stroke-width="1.5"/><rect x="11" y="3" width="12" height="9" fill="none" stroke="#1E1E1E" stroke-width="1.5"/><rect x="13" y="12" width="7" height="6" fill="none" stroke="#1E1E1E" stroke-width="1.5"/><path d="M6 11.5 H11 M8.5 5 V11.5" stroke="#1E1E1E" stroke-width="1.5"/><rect x="6" y="3" width="5" height="4" fill="none" stroke="#1E1E1E" stroke-width="1.5"/></svg>
<div id="t55" style="left:2124.5px;top:256.1px;height:25px;line-height:25px;font-family:'Liberation Sans', sans-serif;font-size:17.55px;color:#1E1E1E;font-weight:normal;white-space:pre;letter-spacing:0.000px;">依赖项</div>
<svg style="left:2061px;top:293.6px" width="10" height="10" viewBox="0 0 10 10"><path d="M10 0 V10 H0 Z" fill="#1E1E1E"/></svg>
<svg style="left:2093px;top:286.6px" width="24" height="19" viewBox="0 0 24 19"><path d="M1 3 V17 H19 L23 8 H19 V5 H10 L8 2 H2 Z" fill="#DCD2B0" stroke="#9A7418" stroke-width="1.6" stroke-linejoin="round"/><path d="M1 17 L5 8 H23" fill="none" stroke="#9A7418" stroke-width="1.6"/></svg>
<div id="t56" style="left:2124.5px;top:284.1px;height:25px;line-height:25px;font-family:'Liberation Sans', sans-serif;font-size:19.37px;color:#1E1E1E;font-weight:normal;white-space:pre;letter-spacing:-0.065px;">Controllers</div>
<svg style="left:2088px;top:315.1px" width="10" height="17" viewBox="0 0 10 17"><path d="M1 1.2 L8.6 8.3 L1 15.4 Z" fill="none" stroke="#1E1E1E" stroke-width="1.6" stroke-linejoin="miter"/></svg>
<svg style="left:2120px;top:315.6px" width="24" height="16" viewBox="0 0 24 16"><path d="M10.4 3.6 Q8.8 1.8 6.4 1.8 Q2.1 1.8 2.1 8.1 Q2.1 14.3 6.4 14.3 Q8.8 14.3 10.4 12.5" fill="none" stroke="#107C10" stroke-width="1.9"/><path d="M15.8 1.8 V10.6 M20.3 1.8 V10.6 M13.4 4.4 H22.8 M13.4 8.2 H22.8" stroke="#107C10" stroke-width="1.7"/></svg>
<div id="t57" style="left:2151.5px;top:312.1px;height:25px;line-height:25px;font-family:'Liberation Sans', sans-serif;font-size:19.35px;color:#1E1E1E;font-weight:normal;white-space:pre;letter-spacing:-0.074px;">HomeController.cs</div>
<svg style="left:2088px;top:343.1px" width="10" height="17" viewBox="0 0 10 17"><path d="M1 1.2 L8.6 8.3 L1 15.4 Z" fill="none" stroke="#1E1E1E" stroke-width="1.6" stroke-linejoin="miter"/></svg>
<svg style="left:2120px;top:343.6px" width="24" height="16" viewBox="0 0 24 16"><path d="M10.4 3.6 Q8.8 1.8 6.4 1.8 Q2.1 1.8 2.1 8.1 Q2.1 14.3 6.4 14.3 Q8.8 14.3 10.4 12.5" fill="none" stroke="#107C10" stroke-width="1.9"/><path d="M15.8 1.8 V10.6 M20.3 1.8 V10.6 M13.4 4.4 H22.8 M13.4 8.2 H22.8" stroke="#107C10" stroke-width="1.7"/></svg>
<div id="t58" style="left:2151.5px;top:340.1px;height:25px;line-height:25px;font-family:'Liberation Sans', sans-serif;font-size:19.32px;color:#1E1E1E;font-weight:normal;white-space:pre;letter-spacing:-0.087px;">MoviesController.cs</div>
<svg style="left:2061px;top:377.6px" width="10" height="10" viewBox="0 0 10 10"><path d="M10 0 V10 H0 Z" fill="#1E1E1E"/></svg>
<svg style="left:2093px;top:370.6px" width="24" height="19" viewBox="0 0 24 19"><path d="M1 3 V17 H19 L23 8 H19 V5 H10 L8 2 H2 Z" fill="#DCD2B0" stroke="#9A7418" stroke-width="1.6" stroke-linejoin="round"/><path d="M1 17 L5 8 H23" fill="none" stroke="#9A7418" stroke-width="1.6"/></svg>
<div id="t59" style="left:2124.5px;top:368.1px;height:25px;line-height:25px;font-family:'Liberation Sans', sans-serif;font-size:19.5px;color:#1E1E1E;font-weight:normal;white-space:pre;letter-spacing:0.339px;">Migrations</div>
<svg style="left:2088px;top:399.1px" width="10" height="17" viewBox="0 0 10 17"><path d="M1 1.2 L8.6 8.3 L1 15.4 Z" fill="none" stroke="#1E1E1E" stroke-width="1.6" stroke-linejoin="miter"/></svg>
<svg style="left:2120px;top:399.6px" width="24" height="16" viewBox="0 0 24 16"><path d="M10.4 3.6 Q8.8 1.8 6.4 1.8 Q2.1 1.8 2.1 8.1 Q2.1 14.3 6.4 14.3 Q8.8 14.3 10.4 12.5" fill="none" stroke="#107C10" stroke-width="1.9"/><path d="M15.8 1.8 V10.6 M20.3 1.8 V10.6 M13.4 4.4 H22.8 M13.4 8.2 H22.8" stroke="#107C10" stroke-width="1.7"/></svg>
<div id="t60" style="left:2151.5px;top:396.1px;height:25px;line-height:25px;font-family:'Liberation Sans', sans-serif;font-size:19.11px;color:#1E1E1E;font-weight:normal;white-space:pre;letter-spacing:-0.216px;">20221009080124_CreateSchema.cs</div>
<svg style="left:2088px;top:427.1px" width="10" height="17" viewBox="0 0 10 17"><path d="M1 1.2 L8.6 8.3 L1 15.4 Z" fill="none" stroke="#1E1E1E" stroke-width="1.6" stroke-linejoin="miter"/></svg>
<svg style="left:2120px;top:427.6px" width="24" height="16" viewBox="0 0 24 16"><path d="M10.4 3.6 Q8.8 1.8 6.4 1.8 Q2.1 1.8 2.1 8.1 Q2.1 14.3 6.4 14.3 Q8.8 14.3 10.4 12.5" fill="none" stroke="#107C10" stroke-width="1.9"/><path d="M15.8 1.8 V10.6 M20.3 1.8 V10.6 M13.4 4.4 H22.8 M13.4 8.2 H22.8" stroke="#107C10" stroke-width="1.7"/></svg>
<div id="t61" style="left:2151.5px;top:424.1px;height:25px;line-height:25px;font-family:'Liberation Sans', sans-serif;font-size:19.4px;color:#1E1E1E;font-weight:normal;white-space:pre;letter-spacing:-0.055px;">MyContextModelSnapshot.cs</div>
<svg style="left:2061px;top:461.6px" width="10" height="10" viewBox="0 0 10 10"><path d="M10 0 V10 H0 Z" fill="#1E1E1E"/></svg>
<svg style="left:2093px;top:454.6px" width="24" height="19" viewBox="0 0 24 19"><path d="M1 3 V17 H19 L23 8 H19 V5 H10 L8 2 H2 Z" fill="#DCD2B0" stroke="#9A7418" stroke-width="1.6" stroke-linejoin="round"/><path d="M1 17 L5 8 H23" fill="none" stroke="#9A7418" stroke-width="1.6"/></svg>
<div id="t62" style="left:2124.5px;top:452.1px;height:25px;line-height:25px;font-family:'Liberation Sans', sans-serif;font-size:19.5px;color:#1E1E1E;font-weight:normal;white-space:pre;letter-spacing:0.025px;">Models</div>
<svg style="left:2088px;top:483.1px" width="10" height="17" viewBox="0 0 10 17"><path d="M1 1.2 L8.6 8.3 L1 15.4 Z" fill="none" stroke="#1E1E1E" stroke-width="1.6" stroke-linejoin="miter"/></svg>
<svg style="left:2120px;top:483.6px" width="24" height="16" viewBox="0 0 24 16"><path d="M10.4 3.6 Q8.8 1.8 6.4 1.8 Q2.1 1.8 2.1 8.1 Q2.1 14.3 6.4 14.3 Q8.8 14.3 10.4 12.5" fill="none" stroke="#107C10" stroke-width="1.9"/><path d="M15.8 1.8 V10.6 M20.3 1.8 V10.6 M13.4 4.4 H22.8 M13.4 8.2 H22.8" stroke="#107C10" stroke-width="1.7"/></svg>
<div id="t63" style="left:2151.5px;top:480.1px;height:25px;line-height:25px;font-family:'Liberation Sans', sans-serif;font-size:19.18px;color:#1E1E1E;font-weight:normal;white-space:pre;letter-spacing:-0.164px;">ErrorViewModel.cs</div>
<svg style="left:2061px;top:517.6px" width="10" height="10" viewBox="0 0 10 10"><path d="M10 0 V10 H0 Z" fill="#1E1E1E"/></svg>
<svg style="left:2093px;top:510.6px" width="24" height="19" viewBox="0 0 24 19"><path d="M1 3 V17 H19 L23 8 H19 V5 H10 L8 2 H2 Z" fill="#DCD2B0" stroke="#9A7418" stroke-width="1.6" stroke-linejoin="round"/><path d="M1 17 L5 8 H23" fill="none" stroke="#9A7418" stroke-width="1.6"/></svg>
<div id="t64" style="left:2124.5px;top:508.1px;height:25px;line-height:25px;font-family:'Liberation Sans', sans-serif;font-size:18.99px;color:#1E1E1E;font-weight:normal;white-space:pre;letter-spacing:-0.330px;">Views</div>
<svg style="left:2088px;top:545.6px" width="10" height="10" viewBox="0 0 10 10"><path d="M10 0 V10 H0 Z" fill="#1E1E1E"/></svg>
<svg style="left:2120px;top:538.6px" width="24" height="19" viewBox="0 0 24 19"><path d="M1 3 V17 H19 L23 8 H19 V5 H10 L8 2 H2 Z" fill="#DCD2B0" stroke="#9A7418" stroke-width="1.6" stroke-linejoin="round"/><path d="M1 17 L5 8 H23" fill="none" stroke="#9A7418" stroke-width="1.6"/></svg>
<div id="t65" style="left:2151.5px;top:536.1px;height:25px;line-height:25px;font-family:'Liberation Sans', sans-serif;font-size:19.31px;color:#1E1E1E;font-weight:normal;white-space:pre;letter-spacing:-0.171px;">Home</div>
<svg style="left:2149px;top:565.1px" width="20" height="22" viewBox="0 0 20 22"><path d="M1.8 1.8 H12.3 L17.8 7.3 V20.2 H1.8 Z" fill="#E2E2E2" stroke="#1E1E1E" stroke-width="1.9" stroke-linejoin="round"/><path d="M12.3 1.8 V7.3 H17.8 Z" fill="#1E1E1E" stroke="#1E1E1E" stroke-width="1.2"/><text x="9.8" y="16.4" font-family="Liberation Sans" font-size="13.5" fill="#1F8A1F" text-anchor="middle">@</text></svg>
<div id="t66" style="left:2178.5px;top:564.1px;height:25px;line-height:25px;font-family:'Liberation Sans', sans-serif;font-size:19.28px;color:#1E1E1E;font-weight:normal;white-space:pre;letter-spacing:-0.112px;">Index.cshtml</div>
<svg style="left:2149px;top:593.1px" width="20" height="22" viewBox="0 0 20 22"><path d="M1.8 1.8 H12.3 L17.8 7.3 V20.2 H1.8 Z" fill="#E2E2E2" stroke="#1E1E1E" stroke-width="1.9" stroke-linejoin="round"/><path d="M12.3 1.8 V7.3 H17.8 Z" fill="#1E1E1E" stroke="#1E1E1E" stroke-width="1.2"/><text x="9.8" y="16.4" font-family="Liberation Sans" font-size="13.5" fill="#1F8A1F" text-anchor="middle">@</text></svg>
<div id="t67" style="left:2178.5px;top:592.1px;height:25px;line-height:25px;font-family:'Liberation Sans', sans-serif;font-size:19.1px;color:#1E1E1E;font-weight:normal;white-space:pre;letter-spacing:-0.196px;">Privacy1.cshtml</div>
<svg style="left:2088px;top:623.1px" width="10" height="17" viewBox="0 0 10 17"><path d="M1 1.2 L8.6 8.3 L1 15.4 Z" fill="none" stroke="#1E1E1E" stroke-width="1.6" stroke-linejoin="miter"/></svg>
<svg style="left:2120px;top:622.6px" width="24" height="19" viewBox="0 0 24 19"><path d="M1 2 H8 L10 4.5 H22 V17 H1 Z" fill="#EFE7D0" stroke="#9A7418" stroke-width="1.6" stroke-linejoin="round"/></svg>
<div id="t68" style="left:2151.5px;top:620.1px;height:25px;line-height:25px;font-family:'Liberation Sans', sans-serif;font-size:19.22px;color:#1E1E1E;font-weight:normal;white-space:pre;letter-spacing:-0.177px;">Movies</div>
<svg style="left:2088px;top:657.6px" width="10" height="10" viewBox="0 0 10 10"><path d="M10 0 V10 H0 Z" fill="#1E1E1E"/></svg>
<svg style="left:2120px;top:650.6px" width="24" height="19" viewBox="0 0 24 19"><path d="M1 3 V17 H19 L23 8 H19 V5 H10 L8 2 H2 Z" fill="#DCD2B0" stroke="#9A7418" stroke-width="1.6" stroke-linejoin="round"/><path d="M1 17 L5 8 H23" fill="none" stroke="#9A7418" stroke-width="1.6"/></svg>
<div id="t69" style="left:2151.5px;top:648.1px;height:25px;line-height:25px;font-family:'Liberation Sans', sans-serif;font-size:18.89px;color:#1E1E1E;font-weight:normal;white-space:pre;letter-spacing:-0.383px;">Shared</div>
<svg style="left:2115px;top:679.1px" width="10" height="17" viewBox="0 0 10 17"><path d="M1 1.2 L8.6 8.3 L1 15.4 Z" fill="none" stroke="#1E1E1E" stroke-width="1.6" stroke-linejoin="miter"/></svg>
<svg style="left:2149px;top:677.1px" width="20" height="22" viewBox="0 0 20 22"><path d="M1.8 1.8 H12.3 L17.8 7.3 V20.2 H1.8 Z" fill="#E2E2E2" stroke="#1E1E1E" stroke-width="1.9" stroke-linejoin="round"/><path d="M12.3 1.8 V7.3 H17.8 Z" fill="#1E1E1E" stroke="#1E1E1E" stroke-width="1.2"/><text x="9.8" y="16.4" font-family="Liberation Sans" font-size="13.5" fill="#1F8A1F" text-anchor="middle">@</text></svg>
<div id="t70" style="left:2178.5px;top:676.1px;height:25px;line-height:25px;font-family:'Liberation Sans', sans-serif;font-size:19.04px;color:#1E1E1E;font-weight:normal;white-space:pre;letter-spacing:-0.234px;">_Layout.cshtml</div>
<svg style="left:2149px;top:705.1px" width="20" height="22" viewBox="0 0 20 22"><path d="M1.8 1.8 H12.3 L17.8 7.3 V20.2 H1.8 Z" fill="#E2E2E2" stroke="#1E1E1E" stroke-width="1.9" stroke-linejoin="round"/><path d="M12.3 1.8 V7.3 H17.8 Z" fill="#1E1E1E" stroke="#1E1E1E" stroke-width="1.2"/><text x="9.8" y="16.4" font-family="Liberation Sans" font-size="13.5" fill="#1F8A1F" text-anchor="middle">@</text></svg>
<div id="t71" style="left:2178.5px;top:704.1px;height:25px;line-height:25px;font-family:'Liberation Sans', sans-serif;font-size:19.37px;color:#1E1E1E;font-weight:normal;white-space:pre;letter-spacing:-0.059px;">_ValidationScriptsPartial.cshtml</div>
<svg style="left:2149px;top:733.1px" width="20" height="22" viewBox="0 0 20 22"><path d="M1.8 1.8 H12.3 L17.8 7.3 V20.2 H1.8 Z" fill="#E2E2E2" stroke="#1E1E1E" stroke-width="1.9" stroke-linejoin="round"/><path d="M12.3 1.8 V7.3 H17.8 Z" fill="#1E1E1E" stroke="#1E1E1E" stroke-width="1.2"/><text x="9.8" y="16.4" font-family="Liberation Sans" font-size="13.5" fill="#1F8A1F" text-anchor="middle">@</text></svg>
<div id="t72" style="left:2178.5px;top:732.1px;height:25px;line-height:25px;font-family:'Liberation Sans', sans-serif;font-size:19.22px;color:#1E1E1E;font-weight:normal;white-space:pre;letter-spacing:-0.136px;">Error.cshtml</div>
<svg style="left:2122px;top:761.1px" width="20" height="22" viewBox="0 0 20 22"><path d="M1.8 1.8 H12.3 L17.8 7.3 V20.2 H1.8 Z" fill="#E2E2E2" stroke="#1E1E1E" stroke-width="1.9" stroke-linejoin="round"/><path d="M12.3 1.8 V7.3 H17.8 Z" fill="#1E1E1E" stroke="#1E1E1E" stroke-width="1.2"/><text x="9.8" y="16.4" font-family="Liberation Sans" font-size="13.5" fill="#1F8A1F" text-anchor="middle">@</text></svg>
<div id="t73" style="left:2151.5px;top:760.1px;height:25px;line-height:25px;font-family:'Liberation Sans', sans-serif;font-size:19.42px;color:#1E1E1E;font-weight:normal;white-space:pre;letter-spacing:-0.042px;">_ViewImports.cshtml</div>
<svg style="left:2122px;top:789.1px" width="20" height="22" viewBox="0 0 20 22"><path d="M1.8 1.8 H12.3 L17.8 7.3 V20.2 H1.8 Z" fill="#E2E2E2" stroke="#1E1E1E" stroke-width="1.9" stroke-linejoin="round"/><path d="M12.3 1.8 V7.3 H17.8 Z" fill="#1E1E1E" stroke="#1E1E1E" stroke-width="1.2"/><text x="9.8" y="16.4" font-family="Liberation Sans" font-size="13.5" fill="#1F8A1F" text-anchor="middle">@</text></svg>
<div id="t74" style="left:2151.5px;top:788.1px;height:25px;line-height:25px;font-family:'Liberation Sans', sans-serif;font-size:19.14px;color:#1E1E1E;font-weight:normal;white-space:pre;letter-spacing:-0.177px;">_ViewStart.cshtml</div>
<svg style="left:2061px;top:819.1px" width="10" height="17" viewBox="0 0 10 17"><path d="M1 1.2 L8.6 8.3 L1 15.4 Z" fill="none" stroke="#1E1E1E" stroke-width="1.6" stroke-linejoin="miter"/></svg>
<svg style="left:2096px;top:817.6px" width="19" height="22" viewBox="0 0 19 22"><path d="M1 1 H13 L18 6 V21 H1 Z" fill="#F0F0F0" stroke="#5A5A5A" stroke-width="1.5"/><text x="9.5" y="16" font-family="Liberation Mono" font-size="11" fill="#1E1E1E" text-anchor="middle">{}</text></svg>
<div id="t75" style="left:2124.5px;top:816.1px;height:25px;line-height:25px;font-family:'Liberation Sans', sans-serif;font-size:19.44px;color:#1E1E1E;font-weight:normal;white-space:pre;letter-spacing:-0.031px;">appsettings.json</div>
<svg style="left:2061px;top:847.1px" width="10" height="17" viewBox="0 0 10 17"><path d="M1 1.2 L8.6 8.3 L1 15.4 Z" fill="none" stroke="#1E1E1E" stroke-width="1.6" stroke-linejoin="miter"/></svg>
<svg style="left:2093px;top:847.6px" width="24" height="16" viewBox="0 0 24 16"><path d="M10.4 3.6 Q8.8 1.8 6.4 1.8 Q2.1 1.8 2.1 8.1 Q2.1 14.3 6.4 14.3 Q8.8 14.3 10.4 12.5" fill="none" stroke="#107C10" stroke-width="1.9"/><path d="M15.8 1.8 V10.6 M20.3 1.8 V10.6 M13.4 4.4 H22.8 M13.4 8.2 H22.8" stroke="#107C10" stroke-width="1.7"/></svg>
<div id="t76" style="left:2124.5px;top:844.1px;height:25px;line-height:25px;font-family:'Liberation Sans', sans-serif;font-size:18.93px;color:#1E1E1E;font-weight:normal;white-space:pre;letter-spacing:-0.330px;">MovieDB.cs</div>
<svg style="left:2061px;top:875.1px" width="10" height="17" viewBox="0 0 10 17"><path d="M1 1.2 L8.6 8.3 L1 15.4 Z" fill="none" stroke="#1E1E1E" stroke-width="1.6" stroke-linejoin="miter"/></svg>
<svg style="left:2093px;top:875.6px" width="24" height="16" viewBox="0 0 24 16"><path d="M10.4 3.6 Q8.8 1.8 6.4 1.8 Q2.1 1.8 2.1 8.1 Q2.1 14.3 6.4 14.3 Q8.8 14.3 10.4 12.5" fill="none" stroke="#107C10" stroke-width="1.9"/><path d="M15.8 1.8 V10.6 M20.3 1.8 V10.6 M13.4 4.4 H22.8 M13.4 8.2 H22.8" stroke="#107C10" stroke-width="1.7"/></svg>
<div id="t77" style="left:2124.5px;top:872.1px;height:25px;line-height:25px;font-family:'Liberation Sans', sans-serif;font-size:19.2px;color:#1E1E1E;font-weight:normal;white-space:pre;letter-spacing:-0.162px;">MovieDBContext.cs</div>
<div style="left:2016px;top:911px;width:493px;height:568px;background:#F5F5F5;border:2px solid #CCCEDB;"></div>
<div style="left:2018px;top:913px;width:493px;height:33px;background:#EEEEF2;"></div>
<div id="t78" style="left:2024px;top:917.0px;height:25px;line-height:25px;font-family:'Liberation Sans', sans-serif;font-size:17.55px;color:#1E1E1E;font-weight:normal;white-space:pre;letter-spacing:0.000px;">属性</div>
<svg style="left:2071px;top:924px" width="351" height="9" viewBox="0 0 351 9"><defs><pattern id="gp2" x="0" y="0" width="6" height="6.2" patternUnits="userSpaceOnUse"><rect x="0" y="0" width="1.8" height="1.8" fill="#A2A2AA"/><rect x="3" y="3.1" width="1.8" height="1.8" fill="#A2A2AA"/></pattern></defs><rect x="0" y="0" width="351" height="8.2" fill="url(#gp2)"/></svg>
<svg style="left:2435px;top:925px" width="12" height="7" viewBox="0 0 12 7"><path d="M0 0 H12 L6 7 Z" fill="#1E1E1E"/></svg>
<svg style="left:2460px;top:920px" width="12" height="17" viewBox="0 0 12 17"><path d="M2 1 H10 M3.5 1 V9 H1 V10.5 H11 V9 H8.5 V1 M6 10.5 V16.5" fill="none" stroke="#1E1E1E" stroke-width="1.6"/><rect x="6.5" y="2" width="2" height="7" fill="#1E1E1E"/></svg>
<svg style="left:2486px;top:922px" width="14" height="14" viewBox="0 0 14 14"><path d="M1 1 L13 13 M13 1 L1 13" stroke="#1E1E1E" stroke-width="1.8"/></svg>
<div style="left:2018px;top:946px;width:493px;height:31px;background:#FFFFFF;"></div>
<svg style="left:2493px;top:959px" width="8" height="5" viewBox="0 0 8 5"><path d="M0 0 H8 L4 5 Z" fill="#6D6D6D"/></svg>
<div style="left:2018px;top:977px;width:493px;height:39px;background:#EEEEF2;"></div>
<svg style="left:2026px;top:984px" width="24" height="24" viewBox="0 0 24 24"><rect x="1" y="1" width="7" height="7" fill="#1E1E1E"/><rect x="1" y="15" width="7" height="7" fill="#1E1E1E"/><path d="M2.5 4.5 H6.5 M4.5 2.5 V6.5 M2.5 18.5 H6.5 M4.5 16.5 V20.5" stroke="#FFFFFF" stroke-width="1.3"/><rect x="11" y="1" width="12" height="1.8" fill="#1E1E1E"/><rect x="11" y="4" width="12" height="1.8" fill="#1E1E1E"/><rect x="11" y="7" width="12" height="1.8" fill="#1E1E1E"/><rect x="11" y="10" width="12" height="1.8" fill="#1E1E1E"/><rect x="11" y="17" width="8" height="1.8" fill="#1E1E1E"/><rect x="21" y="20" width="2" height="1.8" fill="#1E1E1E"/></svg>
<div style="left:2055px;top:980px;width:31.0px;height:30.0px;background:#EEEEF2;border:1.5px solid #3399FF;"></div>
<svg style="left:2060px;top:985px" width="24" height="24" viewBox="0 0 24 24"><rect x="2" y="1" width="9" height="9" fill="#5A5A5A"/><text x="6.5" y="9" font-family="Liberation Sans" font-weight="bold" font-size="9" fill="#FFFFFF" text-anchor="middle">A</text><text x="6.5" y="22" font-family="Liberation Sans" font-weight="bold" font-size="11" fill="#424242" text-anchor="middle">Z</text><path d="M18 4 V18 M14 14 L18 19 L22 14" fill="none" stroke="#1B7FD8" stroke-width="2.2"/></svg>
<div style="left:2092px;top:982px;width:1px;height:30px;background:#CCCEDB;"></div>
<svg style="left:2100px;top:984px" width="24" height="24" viewBox="0 0 24 24"><path d="M2 22 L12 12" stroke="#B4B4B4" stroke-width="3.4" stroke-linecap="round"/><path d="M11 13 Q9 5 15 2 Q19 1 21 2 L17 6 L18 8 L20 9 L23 5 Q24 9 22 12 Q18 15 13 13 Z" fill="#B4B4B4"/></svg>
<div style="left:2018px;top:1388px;width:493px;height:1px;background:#E8E8EC;"></div>
<svg style="left:2545px;top:1132px" width="16" height="79" viewBox="0 0 16 79"><defs><linearGradient id="pg" x1="0" y1="0" x2="0" y2="1"><stop offset="0" stop-color="#7CC4FF"/><stop offset="1" stop-color="#2F80F5"/></linearGradient></defs><rect x="2.6" y="1.6" width="11.4" height="75.4" rx="5.7" fill="#F2F2F5" stroke="#7A7A7A" stroke-width="2.6"/><rect x="6" y="38" width="4.8" height="36.5" rx="2.4" fill="url(#pg)"/></svg>
<div style="left:47px;top:993px;width:1956px;height:456px;background:#EEEEF2;border:2px solid #CCCEDB;"></div>
<div id="t79" style="left:55px;top:999.0px;height:25px;line-height:25px;font-family:'Liberation Sans', sans-serif;font-size:17.8px;color:#1E1E1E;font-weight:normal;white-space:pre;letter-spacing:0.000px;">输出</div>
<svg style="left:103px;top:1006px" width="1814" height="9" viewBox="0 0 1814 9"><defs><pattern id="gp3" x="0" y="0" width="6" height="6.2" patternUnits="userSpaceOnUse"><rect x="0" y="0" width="1.8" height="1.8" fill="#A2A2AA"/><rect x="3" y="3.1" width="1.8" height="1.8" fill="#A2A2AA"/></pattern></defs><rect x="0" y="0" width="1814" height="8.2" fill="url(#gp3)"/></svg>
<svg style="left:1928px;top:1008px" width="12" height="7" viewBox="0 0 12 7"><path d="M0 0 H12 L6 7 Z" fill="#1E1E1E"/></svg>
<svg style="left:1955px;top:1003px" width="12" height="17" viewBox="0 0 12 17"><path d="M2 1 H10 M3.5 1 V9 H1 V10.5 H11 V9 H8.5 V1 M6 10.5 V16.5" fill="none" stroke="#1E1E1E" stroke-width="1.6"/><rect x="6.5" y="2" width="2" height="7" fill="#1E1E1E"/></svg>
<svg style="left:1980px;top:1005px" width="14" height="14" viewBox="0 0 14 14"><path d="M1 1 L13 13 M13 1 L1 13" stroke="#1E1E1E" stroke-width="1.8"/></svg>
<div id="t80" style="left:59.8px;top:1037.0px;height:25px;line-height:25px;font-family:'Liberation Sans', sans-serif;font-size:17.37px;color:#1E1E1E;font-weight:normal;white-space:pre;letter-spacing:0.000px;">显示输出来源(S):</div>
<div style="left:203.5px;top:1033.5px;width:445px;height:27px;background:#FFFFFF;border:2px solid #CCCEDB;"></div>
<div id="t81" style="left:209px;top:1037.0px;height:25px;line-height:25px;font-family:'Liberation Sans', sans-serif;font-size:18.0px;color:#1E1E1E;font-weight:normal;white-space:pre;letter-spacing:0.000px;">调试</div>
<svg style="left:636px;top:1047px" width="9" height="5" viewBox="0 0 9 5"><path d="M0 0 H9 L4.5 5 Z" fill="#424242"/></svg>
<div style="left:662px;top:1036px;width:1.6px;height:27px;background:#CCCEDB;"></div>
<svg style="left:676px;top:1037px" width="22" height="24" viewBox="0 0 22 24"><path d="M8 1 V14 M4 10 L8 14 L12 10" fill="none" stroke="#C3C3C3" stroke-width="1.6"/><rect x="1" y="16" width="20" height="1.8" fill="#C3C3C3"/><rect x="1" y="20.5" width="20" height="1.8" fill="#C3C3C3"/></svg>
<div style="left:708px;top:1036px;width:1.6px;height:27px;background:#CCCEDB;"></div>
<svg style="left:721px;top:1037px" width="22" height="24" viewBox="0 0 22 24"><path d="M1 5 H10 M4 2 L1 5 L4 8" fill="none" stroke="#C3C3C3" stroke-width="1.6"/><rect x="3" y="12" width="18" height="1.8" fill="#C3C3C3"/><rect x="3" y="16" width="18" height="1.8" fill="#C3C3C3"/><rect x="3" y="20.5" width="18" height="1.8" fill="#C3C3C3"/></svg>
<svg style="left:755px;top:1037px" width="22" height="24" viewBox="0 0 22 24"><path d="M1 5 H10 M7 2 L10 5 L7 8" fill="none" stroke="#C3C3C3" stroke-width="1.6"/><rect x="1" y="12" width="18" height="1.8" fill="#C3C3C3"/><rect x="1" y="16" width="18" height="1.8" fill="#C3C3C3"/><rect x="1" y="20.5" width="18" height="1.8" fill="#C3C3C3"/></svg>
<div style="left:789px;top:1036px;width:1.6px;height:27px;background:#CCCEDB;"></div>
<svg style="left:804px;top:1037px" width="23" height="24" viewBox="0 0 23 24"><path d="M1 1 L8 8 M8 1 L1 8" stroke="#E51400" stroke-width="1.8"/><rect x="11" y="1.0" width="11" height="1.8" fill="#1E1E1E"/><rect x="11" y="5.3" width="11" height="1.8" fill="#1E1E1E"/><rect x="11" y="9.6" width="11" height="1.8" fill="#1E1E1E"/><rect x="1" y="13.9" width="21" height="1.8" fill="#1E1E1E"/><rect x="1" y="18.2" width="21" height="1.8" fill="#1E1E1E"/></svg>
<div style="left:836.5px;top:1036px;width:1.6px;height:27px;background:#CCCEDB;"></div>
<svg style="left:850px;top:1038px" width="24" height="22" viewBox="0 0 24 22"><text x="1" y="9" font-family="Liberation Sans" font-weight="bold" font-size="10" fill="#1E1E1E">ab</text><text x="1" y="20" font-family="Liberation Sans" font-weight="bold" font-size="10" fill="#1E1E1E">c</text><path d="M21 9 V17 H10 M13 14 L10 17 L13 20" fill="none" stroke="#1B6AC9" stroke-width="1.7"/></svg>
<div style="left:49px;top:1067px;width:1927px;height:363px;background:#E6E7E8;"></div>
<div style="left:67.30px;top:1069.7px;height:22px;line-height:22px;font-family:'Liberation Mono', monospace;font-size:16.3px;letter-spacing:-0.810px;color:#1E1E1E;white-space:pre">--- End of stack trace from previous location ---</div>
<div style="left:67.30px;top:1092.2px;height:22px;line-height:22px;font-family:'Liberation Mono', monospace;font-size:16.3px;letter-spacing:-0.810px;color:#1E1E1E;white-space:pre">   at Microsoft.AspNetCore.Mvc.Infrastructure.ResourceInvoker.&lt;InvokeAsync&gt;g__Awaited|17_0(ResourceInvoker invoker, Task task, IDisposable scope)</div>
<div style="left:67.30px;top:1114.6px;height:22px;line-height:22px;font-family:'Liberation Mono', monospace;font-size:16.3px;letter-spacing:-0.810px;color:#1E1E1E;white-space:pre">   at Microsoft.AspNetCore.Mvc.Infrastructure.ResourceInvoker.&lt;InvokeAsync&gt;g__Awaited|17_0(ResourceInvoker invoker, Task task, IDisposable scope)</div>
<div style="left:67.30px;top:1137.0px;height:22px;line-height:22px;font-family:'Liberation Mono', monospace;font-size:16.3px;letter-spacing:-0.810px;color:#1E1E1E;white-space:pre">   at Microsoft.AspNetCore.Routing.EndpointMiddleware.&lt;Invoke&gt;g__AwaitRequestTask|6_0(Endpoint endpoint, Task requestTask, ILogger logger)</div>
<div style="left:67.30px;top:1159.5px;height:22px;line-height:22px;font-family:'Liberation Mono', monospace;font-size:16.3px;letter-spacing:-0.810px;color:#1E1E1E;white-space:pre">   at Microsoft.AspNetCore.Authorization.AuthorizationMiddleware.Invoke(HttpContext context)</div>
<div style="left:67.30px;top:1182.0px;height:22px;line-height:22px;font-family:'Liberation Mono', monospace;font-size:16.3px;letter-spacing:-0.810px;color:#1E1E1E;white-space:pre">   at Microsoft.AspNetCore.Diagnostics.DeveloperExceptionPageMiddleware.Invoke(HttpContext context)</div>
<div style="left:67.30px;top:1204.4px;width:17.94px;height:22px;line-height:22px;font-family:'Liberation Mono', monospace;font-size:16.86px;color:#1E1E1E;white-space:pre;text-align:left">线</div>
<div style="left:85.24px;top:1204.4px;width:17.94px;height:22px;line-height:22px;font-family:'Liberation Mono', monospace;font-size:16.86px;color:#1E1E1E;white-space:pre;text-align:left">程</div>
<div style="left:103.18px;top:1204.4px;height:22px;line-height:22px;font-family:'Liberation Mono', monospace;font-size:16.3px;letter-spacing:-0.810px;color:#1E1E1E;white-space:pre"> 0x5cb0 </div>
<div style="left:174.94px;top:1204.4px;width:17.94px;height:22px;line-height:22px;font-family:'Liberation Mono', monospace;font-size:16.86px;color:#1E1E1E;white-space:pre;text-align:left">已</div>
<div style="left:192.88px;top:1204.4px;width:17.94px;height:22px;line-height:22px;font-family:'Liberation Mono', monospace;font-size:16.86px;color:#1E1E1E;white-space:pre;text-align:left">退</div>
<div style="left:210.82px;top:1204.4px;width:17.94px;height:22px;line-height:22px;font-family:'Liberation Mono', monospace;font-size:16.86px;color:#1E1E1E;white-space:pre;text-align:left">出</div>
<div style="left:225.62px;top:1204.4px;width:17.94px;height:22px;line-height:22px;font-family:'Liberation Mono', monospace;font-size:16.86px;color:#1E1E1E;white-space:pre;text-align:left">，</div>
<div style="left:246.70px;top:1204.4px;width:17.94px;height:22px;line-height:22px;font-family:'Liberation Mono', monospace;font-size:16.86px;color:#1E1E1E;white-space:pre;text-align:left">返</div>
<div style="left:264.64px;top:1204.4px;width:17.94px;height:22px;line-height:22px;font-family:'Liberation Mono', monospace;font-size:16.86px;color:#1E1E1E;white-space:pre;text-align:left">回</div>
<div style="left:282.58px;top:1204.4px;width:17.94px;height:22px;line-height:22px;font-family:'Liberation Mono', monospace;font-size:16.86px;color:#1E1E1E;white-space:pre;text-align:left">值</div>
<div style="left:300.52px;top:1204.4px;width:17.94px;height:22px;line-height:22px;font-family:'Liberation Mono', monospace;font-size:16.86px;color:#1E1E1E;white-space:pre;text-align:left">为</div>
<div style="left:318.46px;top:1204.4px;height:22px;line-height:22px;font-family:'Liberation Mono', monospace;font-size:16.3px;letter-spacing:-0.810px;color:#1E1E1E;white-space:pre"> 0 (0x0)</div>
<div style="left:390.22px;top:1204.4px;width:17.94px;height:22px;line-height:22px;font-family:'Liberation Mono', monospace;font-size:16.86px;color:#1E1E1E;white-space:pre;text-align:left">。</div>
<div style="left:67.30px;top:1226.9px;width:17.94px;height:22px;line-height:22px;font-family:'Liberation Mono', monospace;font-size:16.86px;color:#1E1E1E;white-space:pre;text-align:left">线</div>
<div style="left:85.24px;top:1226.9px;width:17.94px;height:22px;line-height:22px;font-family:'Liberation Mono', monospace;font-size:16.86px;color:#1E1E1E;white-space:pre;text-align:left">程</div>
<div style="left:103.18px;top:1226.9px;height:22px;line-height:22px;font-family:'Liberation Mono', monospace;font-size:16.3px;letter-spacing:-0.810px;color:#1E1E1E;white-space:pre"> 0x50b4 </div>
<div style="left:174.94px;top:1226.9px;width:17.94px;height:22px;line-height:22px;font-family:'Liberation Mono', monospace;font-size:16.86px;color:#1E1E1E;white-space:pre;text-align:left">已</div>
<div style="left:192.88px;top:1226.9px;width:17.94px;height:22px;line-height:22px;font-family:'Liberation Mono', monospace;font-size:16.86px;color:#1E1E1E;white-space:pre;text-align:left">退</div>
<div style="left:210.82px;top:1226.9px;width:17.94px;height:22px;line-height:22px;font-family:'Liberation Mono', monospace;font-size:16.86px;color:#1E1E1E;white-space:pre;text-align:left">出</div>
<div style="left:225.62px;top:1226.9px;width:17.94px;height:22px;line-height:22px;font-family:'Liberation Mono', monospace;font-size:16.86px;color:#1E1E1E;white-space:pre;text-align:left">，</div>
<div style="left:246.70px;top:1226.9px;width:17.94px;height:22px;line-height:22px;font-family:'Liberation Mono', monospace;font-size:16.86px;color:#1E1E1E;white-space:pre;text-align:left">返</div>
<div style="left:264.64px;top:1226.9px;width:17.94px;height:22px;line-height:22px;font-family:'Liberation Mono', monospace;font-size:16.86px;color:#1E1E1E;white-space:pre;text-align:left">回</div>
<div style="left:282.58px;top:1226.9px;width:17.94px;height:22px;line-height:22px;font-family:'Liberation Mono', monospace;font-size:16.86px;color:#1E1E1E;white-space:pre;text-align:left">值</div>
<div style="left:300.52px;top:1226.9px;width:17.94px;height:22px;line-height:22px;font-family:'Liberation Mono', monospace;font-size:16.86px;color:#1E1E1E;white-space:pre;text-align:left">为</div>
<div style="left:318.46px;top:1226.9px;height:22px;line-height:22px;font-family:'Liberation Mono', monospace;font-size:16.3px;letter-spacing:-0.810px;color:#1E1E1E;white-space:pre"> 0 (0x0)</div>
<div style="left:390.22px;top:1226.9px;width:17.94px;height:22px;line-height:22px;font-family:'Liberation Mono', monospace;font-size:16.86px;color:#1E1E1E;white-space:pre;text-align:left">。</div>
<div style="left:67.30px;top:1249.3px;width:17.94px;height:22px;line-height:22px;font-family:'Liberation Mono', monospace;font-size:16.86px;color:#1E1E1E;white-space:pre;text-align:left">线</div>
<div style="left:85.24px;top:1249.3px;width:17.94px;height:22px;line-height:22px;font-family:'Liberation Mono', monospace;font-size:16.86px;color:#1E1E1E;white-space:pre;text-align:left">程</div>
<div style="left:103.18px;top:1249.3px;height:22px;line-height:22px;font-family:'Liberation Mono', monospace;font-size:16.3px;letter-spacing:-0.810px;color:#1E1E1E;white-space:pre"> 0x8ca8 </div>
<div style="left:174.94px;top:1249.3px;width:17.94px;height:22px;line-height:22px;font-family:'Liberation Mono', monospace;font-size:16.86px;color:#1E1E1E;white-space:pre;text-align:left">已</div>
<div style="left:192.88px;top:1249.3px;width:17.94px;height:22px;line-height:22px;font-family:'Liberation Mono', monospace;font-size:16.86px;color:#1E1E1E;white-space:pre;text-align:left">退</div>
<div style="left:210.82px;top:1249.3px;width:17.94px;height:22px;line-height:22px;font-family:'Liberation Mono', monospace;font-size:16.86px;color:#1E1E1E;white-space:pre;text-align:left">出</div>
<div style="left:225.62px;top:1249.3px;width:17.94px;height:22px;line-height:22px;font-family:'Liberation Mono', monospace;font-size:16.86px;color:#1E1E1E;white-space:pre;text-align:left">，</div>
<div style="left:246.70px;top:1249.3px;width:17.94px;height:22px;line-height:22px;font-family:'Liberation Mono', monospace;font-size:16.86px;color:#1E1E1E;white-space:pre;text-align:left">返</div>
<div style="left:264.64px;top:1249.3px;width:17.94px;height:22px;line-height:22px;font-family:'Liberation Mono', monospace;font-size:16.86px;color:#1E1E1E;white-space:pre;text-align:left">回</div>
<div style="left:282.58px;top:1249.3px;width:17.94px;height:22px;line-height:22px;font-family:'Liberation Mono', monospace;font-size:16.86px;color:#1E1E1E;white-space:pre;text-align:left">值</div>
<div style="left:300.52px;top:1249.3px;width:17.94px;height:22px;line-height:22px;font-family:'Liberation Mono', monospace;font-size:16.86px;color:#1E1E1E;white-space:pre;text-align:left">为</div>
<div style="left:318.46px;top:1249.3px;height:22px;line-height:22px;font-family:'Liberation Mono', monospace;font-size:16.3px;letter-spacing:-0.810px;color:#1E1E1E;white-space:pre"> 0 (0x0)</div>
<div style="left:390.22px;top:1249.3px;width:17.94px;height:22px;line-height:22px;font-family:'Liberation Mono', monospace;font-size:16.86px;color:#1E1E1E;white-space:pre;text-align:left">。</div>
<div style="left:67.30px;top:1271.8px;width:17.94px;height:22px;line-height:22px;font-family:'Liberation Mono', monospace;font-size:16.86px;color:#1E1E1E;white-space:pre;text-align:left">线</div>
<div style="left:85.24px;top:1271.8px;width:17.94px;height:22px;line-height:22px;font-family:'Liberation Mono', monospace;font-size:16.86px;color:#1E1E1E;white-space:pre;text-align:left">程</div>
<div style="left:103.18px;top:1271.8px;height:22px;line-height:22px;font-family:'Liberation Mono', monospace;font-size:16.3px;letter-spacing:-0.810px;color:#1E1E1E;white-space:pre"> 0x2794 </div>
<div style="left:174.94px;top:1271.8px;width:17.94px;height:22px;line-height:22px;font-family:'Liberation Mono', monospace;font-size:16.86px;color:#1E1E1E;white-space:pre;text-align:left">已</div>
<div style="left:192.88px;top:1271.8px;width:17.94px;height:22px;line-height:22px;font-family:'Liberation Mono', monospace;font-size:16.86px;color:#1E1E1E;white-space:pre;text-align:left">退</div>
<div style="left:210.82px;top:1271.8px;width:17.94px;height:22px;line-height:22px;font-family:'Liberation Mono', monospace;font-size:16.86px;color:#1E1E1E;white-space:pre;text-align:left">出</div>
<div style="left:225.62px;top:1271.8px;width:17.94px;height:22px;line-height:22px;font-family:'Liberation Mono', monospace;font-size:16.86px;color:#1E1E1E;white-space:pre;text-align:left">，</div>
<div style="left:246.70px;top:1271.8px;width:17.94px;height:22px;line-height:22px;font-family:'Liberation Mono', monospace;font-size:16.86px;color:#1E1E1E;white-space:pre;text-align:left">返</div>
<div style="left:264.64px;top:1271.8px;width:17.94px;height:22px;line-height:22px;font-family:'Liberation Mono', monospace;font-size:16.86px;color:#1E1E1E;white-space:pre;text-align:left">回</div>
<div style="left:282.58px;top:1271.8px;width:17.94px;height:22px;line-height:22px;font-family:'Liberation Mono', monospace;font-size:16.86px;color:#1E1E1E;white-space:pre;text-align:left">值</div>
<div style="left:300.52px;top:1271.8px;width:17.94px;height:22px;line-height:22px;font-family:'Liberation Mono', monospace;font-size:16.86px;color:#1E1E1E;white-space:pre;text-align:left">为</div>
<div style="left:318.46px;top:1271.8px;height:22px;line-height:22px;font-family:'Liberation Mono', monospace;font-size:16.3px;letter-spacing:-0.810px;color:#1E1E1E;white-space:pre"> 0 (0x0)</div>
<div style="left:390.22px;top:1271.8px;width:17.94px;height:22px;line-height:22px;font-family:'Liberation Mono', monospace;font-size:16.86px;color:#1E1E1E;white-space:pre;text-align:left">。</div>
<div style="left:67.30px;top:1294.2px;width:17.94px;height:22px;line-height:22px;font-family:'Liberation Mono', monospace;font-size:16.86px;color:#1E1E1E;white-space:pre;text-align:left">线</div>
<div style="left:85.24px;top:1294.2px;width:17.94px;height:22px;line-height:22px;font-family:'Liberation Mono', monospace;font-size:16.86px;color:#1E1E1E;white-space:pre;text-align:left">程</div>
<div style="left:103.18px;top:1294.2px;height:22px;line-height:22px;font-family:'Liberation Mono', monospace;font-size:16.3px;letter-spacing:-0.810px;color:#1E1E1E;white-space:pre"> 0x7194 </div>
<div style="left:174.94px;top:1294.2px;width:17.94px;height:22px;line-height:22px;font-family:'Liberation Mono', monospace;font-size:16.86px;color:#1E1E1E;white-space:pre;text-align:left">已</div>
<div style="left:192.88px;top:1294.2px;width:17.94px;height:22px;line-height:22px;font-family:'Liberation Mono', monospace;font-size:16.86px;color:#1E1E1E;white-space:pre;text-align:left">退</div>
<div style="left:210.82px;top:1294.2px;width:17.94px;height:22px;line-height:22px;font-family:'Liberation Mono', monospace;font-size:16.86px;color:#1E1E1E;white-space:pre;text-align:left">出</div>
<div style="left:225.62px;top:1294.2px;width:17.94px;height:22px;line-height:22px;font-family:'Liberation Mono', monospace;font-size:16.86px;color:#1E1E1E;white-space:pre;text-align:left">，</div>
<div style="left:246.70px;top:1294.2px;width:17.94px;height:22px;line-height:22px;font-family:'Liberation Mono', monospace;font-size:16.86px;color:#1E1E1E;white-space:pre;text-align:left">返</div>
<div style="left:264.64px;top:1294.2px;width:17.94px;height:22px;line-height:22px;font-family:'Liberation Mono', monospace;font-size:16.86px;color:#1E1E1E;white-space:pre;text-align:left">回</div>
<div style="left:282.58px;top:1294.2px;width:17.94px;height:22px;line-height:22px;font-family:'Liberation Mono', monospace;font-size:16.86px;color:#1E1E1E;white-space:pre;text-align:left">值</div>
<div style="left:300.52px;top:1294.2px;width:17.94px;height:22px;line-height:22px;font-family:'Liberation Mono', monospace;font-size:16.86px;color:#1E1E1E;white-space:pre;text-align:left">为</div>
<div style="left:318.46px;top:1294.2px;height:22px;line-height:22px;font-family:'Liberation Mono', monospace;font-size:16.3px;letter-spacing:-0.810px;color:#1E1E1E;white-space:pre"> 0 (0x0)</div>
<div style="left:390.22px;top:1294.2px;width:17.94px;height:22px;line-height:22px;font-family:'Liberation Mono', monospace;font-size:16.86px;color:#1E1E1E;white-space:pre;text-align:left">。</div>
<div style="left:67.30px;top:1316.7px;width:17.94px;height:22px;line-height:22px;font-family:'Liberation Mono', monospace;font-size:16.86px;color:#1E1E1E;white-space:pre;text-align:left">线</div>
<div style="left:85.24px;top:1316.7px;width:17.94px;height:22px;line-height:22px;font-family:'Liberation Mono', monospace;font-size:16.86px;color:#1E1E1E;white-space:pre;text-align:left">程</div>
<div style="left:103.18px;top:1316.7px;height:22px;line-height:22px;font-family:'Liberation Mono', monospace;font-size:16.3px;letter-spacing:-0.810px;color:#1E1E1E;white-space:pre"> 0x4714 </div>
<div style="left:174.94px;top:1316.7px;width:17.94px;height:22px;line-height:22px;font-family:'Liberation Mono', monospace;font-size:16.86px;color:#1E1E1E;white-space:pre;text-align:left">已</div>
<div style="left:192.88px;top:1316.7px;width:17.94px;height:22px;line-height:22px;font-family:'Liberation Mono', monospace;font-size:16.86px;color:#1E1E1E;white-space:pre;text-align:left">退</div>
<div style="left:210.82px;top:1316.7px;width:17.94px;height:22px;line-height:22px;font-family:'Liberation Mono', monospace;font-size:16.86px;color:#1E1E1E;white-space:pre;text-align:left">出</div>
<div style="left:225.62px;top:1316.7px;width:17.94px;height:22px;line-height:22px;font-family:'Liberation Mono', monospace;font-size:16.86px;color:#1E1E1E;white-space:pre;text-align:left">，</div>
<div style="left:246.70px;top:1316.7px;width:17.94px;height:22px;line-height:22px;font-family:'Liberation Mono', monospace;font-size:16.86px;color:#1E1E1E;white-space:pre;text-align:left">返</div>
<div style="left:264.64px;top:1316.7px;width:17.94px;height:22px;line-height:22px;font-family:'Liberation Mono', monospace;font-size:16.86px;color:#1E1E1E;white-space:pre;text-align:left">回</div>
<div style="left:282.58px;top:1316.7px;width:17.94px;height:22px;line-height:22px;font-family:'Liberation Mono', monospace;font-size:16.86px;color:#1E1E1E;white-space:pre;text-align:left">值</div>
<div style="left:300.52px;top:1316.7px;width:17.94px;height:22px;line-height:22px;font-family:'Liberation Mono', monospace;font-size:16.86px;color:#1E1E1E;white-space:pre;text-align:left">为</div>
<div style="left:318.46px;top:1316.7px;height:22px;line-height:22px;font-family:'Liberation Mono', monospace;font-size:16.3px;letter-spacing:-0.810px;color:#1E1E1E;white-space:pre"> 0 (0x0)</div>
<div style="left:390.22px;top:1316.7px;width:17.94px;height:22px;line-height:22px;font-family:'Liberation Mono', monospace;font-size:16.86px;color:#1E1E1E;white-space:pre;text-align:left">。</div>
<div style="left:67.30px;top:1339.1px;width:17.94px;height:22px;line-height:22px;font-family:'Liberation Mono', monospace;font-size:16.86px;color:#1E1E1E;white-space:pre;text-align:left">线</div>
<div style="left:85.24px;top:1339.1px;width:17.94px;height:22px;line-height:22px;font-family:'Liberation Mono', monospace;font-size:16.86px;color:#1E1E1E;white-space:pre;text-align:left">程</div>
<div style="left:103.18px;top:1339.1px;height:22px;line-height:22px;font-family:'Liberation Mono', monospace;font-size:16.3px;letter-spacing:-0.810px;color:#1E1E1E;white-space:pre"> 0x89d0 </div>
<div style="left:174.94px;top:1339.1px;width:17.94px;height:22px;line-height:22px;font-family:'Liberation Mono', monospace;font-size:16.86px;color:#1E1E1E;white-space:pre;text-align:left">已</div>
<div style="left:192.88px;top:1339.1px;width:17.94px;height:22px;line-height:22px;font-family:'Liberation Mono', monospace;font-size:16.86px;color:#1E1E1E;white-space:pre;text-align:left">退</div>
<div style="left:210.82px;top:1339.1px;width:17.94px;height:22px;line-height:22px;font-family:'Liberation Mono', monospace;font-size:16.86px;color:#1E1E1E;white-space:pre;text-align:left">出</div>
<div style="left:225.62px;top:1339.1px;width:17.94px;height:22px;line-height:22px;font-family:'Liberation Mono', monospace;font-size:16.86px;color:#1E1E1E;white-space:pre;text-align:left">，</div>
<div style="left:246.70px;top:1339.1px;width:17.94px;height:22px;line-height:22px;font-family:'Liberation Mono', monospace;font-size:16.86px;color:#1E1E1E;white-space:pre;text-align:left">返</div>
<div style="left:264.64px;top:1339.1px;width:17.94px;height:22px;line-height:22px;font-family:'Liberation Mono', monospace;font-size:16.86px;color:#1E1E1E;white-space:pre;text-align:left">回</div>
<div style="left:282.58px;top:1339.1px;width:17.94px;height:22px;line-height:22px;font-family:'Liberation Mono', monospace;font-size:16.86px;color:#1E1E1E;white-space:pre;text-align:left">值</div>
<div style="left:300.52px;top:1339.1px;width:17.94px;height:22px;line-height:22px;font-family:'Liberation Mono', monospace;font-size:16.86px;color:#1E1E1E;white-space:pre;text-align:left">为</div>
<div style="left:318.46px;top:1339.1px;height:22px;line-height:22px;font-family:'Liberation Mono', monospace;font-size:16.3px;letter-spacing:-0.810px;color:#1E1E1E;white-space:pre"> 0 (0x0)</div>
<div style="left:390.22px;top:1339.1px;width:17.94px;height:22px;line-height:22px;font-family:'Liberation Mono', monospace;font-size:16.86px;color:#1E1E1E;white-space:pre;text-align:left">。</div>
<div style="left:67.30px;top:1361.5px;width:17.94px;height:22px;line-height:22px;font-family:'Liberation Mono', monospace;font-size:16.86px;color:#1E1E1E;white-space:pre;text-align:left">线</div>
<div style="left:85.24px;top:1361.5px;width:17.94px;height:22px;line-height:22px;font-family:'Liberation Mono', monospace;font-size:16.86px;color:#1E1E1E;white-space:pre;text-align:left">程</div>
<div style="left:103.18px;top:1361.5px;height:22px;line-height:22px;font-family:'Liberation Mono', monospace;font-size:16.3px;letter-spacing:-0.810px;color:#1E1E1E;white-space:pre"> 0x3640 </div>
<div style="left:174.94px;top:1361.5px;width:17.94px;height:22px;line-height:22px;font-family:'Liberation Mono', monospace;font-size:16.86px;color:#1E1E1E;white-space:pre;text-align:left">已</div>
<div style="left:192.88px;top:1361.5px;width:17.94px;height:22px;line-height:22px;font-family:'Liberation Mono', monospace;font-size:16.86px;color:#1E1E1E;white-space:pre;text-align:left">退</div>
<div style="left:210.82px;top:1361.5px;width:17.94px;height:22px;line-height:22px;font-family:'Liberation Mono', monospace;font-size:16.86px;color:#1E1E1E;white-space:pre;text-align:left">出</div>
<div style="left:225.62px;top:1361.5px;width:17.94px;height:22px;line-height:22px;font-family:'Liberation Mono', monospace;font-size:16.86px;color:#1E1E1E;white-space:pre;text-align:left">，</div>
<div style="left:246.70px;top:1361.5px;width:17.94px;height:22px;line-height:22px;font-family:'Liberation Mono', monospace;font-size:16.86px;color:#1E1E1E;white-space:pre;text-align:left">返</div>
<div style="left:264.64px;top:1361.5px;width:17.94px;height:22px;line-height:22px;font-family:'Liberation Mono', monospace;font-size:16.86px;color:#1E1E1E;white-space:pre;text-align:left">回</div>
<div style="left:282.58px;top:1361.5px;width:17.94px;height:22px;line-height:22px;font-family:'Liberation Mono', monospace;font-size:16.86px;color:#1E1E1E;white-space:pre;text-align:left">值</div>
<div style="left:300.52px;top:1361.5px;width:17.94px;height:22px;line-height:22px;font-family:'Liberation Mono', monospace;font-size:16.86px;color:#1E1E1E;white-space:pre;text-align:left">为</div>
<div style="left:318.46px;top:1361.5px;height:22px;line-height:22px;font-family:'Liberation Mono', monospace;font-size:16.3px;letter-spacing:-0.810px;color:#1E1E1E;white-space:pre"> 0 (0x0)</div>
<div style="left:390.22px;top:1361.5px;width:17.94px;height:22px;line-height:22px;font-family:'Liberation Mono', monospace;font-size:16.86px;color:#1E1E1E;white-space:pre;text-align:left">。</div>
<div style="left:67.30px;top:1384.0px;width:17.94px;height:22px;line-height:22px;font-family:'Liberation Mono', monospace;font-size:16.86px;color:#1E1E1E;white-space:pre;text-align:left">程</div>
<div style="left:85.24px;top:1384.0px;width:17.94px;height:22px;line-height:22px;font-family:'Liberation Mono', monospace;font-size:16.86px;color:#1E1E1E;white-space:pre;text-align:left">序</div>
<div style="left:103.18px;top:1384.0px;width:17.94px;height:22px;line-height:22px;font-family:'Liberation Mono', monospace;font-size:16.3px;color:#1E1E1E;white-space:pre;text-align:right">“</div>
<div style="left:121.12px;top:1384.0px;height:22px;line-height:22px;font-family:'Liberation Mono', monospace;font-size:16.3px;letter-spacing:-0.810px;color:#1E1E1E;white-space:pre">[13560] WebMvc.exe</div>
<div style="left:282.58px;top:1384.0px;width:17.94px;height:22px;line-height:22px;font-family:'Liberation Mono', monospace;font-size:16.3px;color:#1E1E1E;white-space:pre;text-align:left">”</div>
<div style="left:300.52px;top:1384.0px;width:17.94px;height:22px;line-height:22px;font-family:'Liberation Mono', monospace;font-size:16.86px;color:#1E1E1E;white-space:pre;text-align:left">已</div>
<div style="left:318.46px;top:1384.0px;width:17.94px;height:22px;line-height:22px;font-family:'Liberation Mono', monospace;font-size:16.86px;color:#1E1E1E;white-space:pre;text-align:left">退</div>
<div style="left:336.40px;top:1384.0px;width:17.94px;height:22px;line-height:22px;font-family:'Liberation Mono', monospace;font-size:16.86px;color:#1E1E1E;white-space:pre;text-align:left">出</div>
<div style="left:351.20px;top:1384.0px;width:17.94px;height:22px;line-height:22px;font-family:'Liberation Mono', monospace;font-size:16.86px;color:#1E1E1E;white-space:pre;text-align:left">，</div>
<div style="left:372.28px;top:1384.0px;width:17.94px;height:22px;line-height:22px;font-family:'Liberation Mono', monospace;font-size:16.86px;color:#1E1E1E;white-space:pre;text-align:left">返</div>
<div style="left:390.22px;top:1384.0px;width:17.94px;height:22px;line-height:22px;font-family:'Liberation Mono', monospace;font-size:16.86px;color:#1E1E1E;white-space:pre;text-align:left">回</div>
<div style="left:408.16px;top:1384.0px;width:17.94px;height:22px;line-height:22px;font-family:'Liberation Mono', monospace;font-size:16.86px;color:#1E1E1E;white-space:pre;text-align:left">值</div>
<div style="left:426.10px;top:1384.0px;width:17.94px;height:22px;line-height:22px;font-family:'Liberation Mono', monospace;font-size:16.86px;color:#1E1E1E;white-space:pre;text-align:left">为</div>
<div style="left:444.04px;top:1384.0px;height:22px;line-height:22px;font-family:'Liberation Mono', monospace;font-size:16.3px;letter-spacing:-0.810px;color:#1E1E1E;white-space:pre"> 4294967295 (0xffffffff)</div>
<div style="left:659.32px;top:1384.0px;width:17.94px;height:22px;line-height:22px;font-family:'Liberation Mono', monospace;font-size:16.86px;color:#1E1E1E;white-space:pre;text-align:left">。</div>
<div style="left:1976px;top:1067px;width:29px;height:363px;background:#F5F5F5;"></div>
<svg style="left:1984px;top:1077px" width="13" height="8" viewBox="0 0 13 8"><path d="M0 8 L6.5 0 L13 8 Z" fill="#868999"/></svg>
<div style="left:1984px;top:1357px;width:15px;height:19px;background:#C2C3C9;"></div>
<div style="left:1976px;top:1377px;width:29px;height:2.5px;background:#0000FF;"></div>
<svg style="left:1984px;top:1411px" width="13" height="8" viewBox="0 0 13 8"><path d="M0 0 L6.5 8 L13 0 Z" fill="#868999"/></svg>
<div style="left:49px;top:1430px;width:1956px;height:21px;background:#F5F5F5;"></div>
<svg style="left:58px;top:1434px" width="8" height="12" viewBox="0 0 8 12"><path d="M8 0 V12 L0 6 Z" fill="#868999"/></svg>
<div style="left:74.5px;top:1435px;width:1290.5px;height:10px;background:#C2C3C9;"></div>
<svg style="left:1958px;top:1434px" width="8" height="12" viewBox="0 0 8 12"><path d="M0 0 V12 L8 6 Z" fill="#868999"/></svg>
<div id="t82" style="left:56.4px;top:1454.5px;height:25px;line-height:25px;font-family:'Liberation Sans', sans-serif;font-size:18.11px;color:#1E1E1E;font-weight:normal;white-space:pre;letter-spacing:0.000px;">程序包管理器控制台</div>
<div id="t83" style="left:237.6px;top:1454.5px;height:25px;line-height:25px;font-family:'Liberation Sans', sans-serif;font-size:18.1px;color:#1E1E1E;font-weight:normal;white-space:pre;letter-spacing:0.000px;">错误列表</div>
<div id="t84" style="left:329.4px;top:1454.5px;height:25px;line-height:25px;font-family:'Liberation Sans', sans-serif;font-size:17.82px;color:#1E1E1E;font-weight:normal;white-space:pre;letter-spacing:0.000px;">即时窗口</div>
<div style="left:410.5px;top:1451px;width:50px;height:29px;border:2px solid #CCCEDB;border-top:none;background:#F5F5F5"></div>
<div id="t85" style="left:420px;top:1454.5px;height:25px;line-height:25px;font-family:'Liberation Sans', sans-serif;font-size:17.5px;color:#0E70C0;font-weight:normal;white-space:pre;letter-spacing:0.000px;">输出</div>
<div style="left:0px;top:1492px;width:2560px;height:36px;background:#0067C0;"></div>
<div style="left:0px;top:1528px;width:2560px;height:2px;background:#B4B4B4;"></div>
<svg style="left:5px;top:1497px" width="26" height="28" viewBox="0 0 26 28"><path d="M1.5 1.5 H23.5 V18.5 H16 L12.5 23 L9 18.5 H1.5 Z" fill="#2A7FCF" stroke="#FFFFFF" stroke-width="1.8"/></svg>
<div id="t86" style="left:42px;top:1498.0px;height:25px;line-height:25px;font-family:'Liberation Sans', sans-serif;font-size:17.5px;color:#FFFFFF;font-weight:normal;white-space:pre;letter-spacing:0.000px;">就绪</div>
<svg style="left:2100px;top:1500px" width="17" height="20" viewBox="0 0 17 20"><path d="M8.5 1 L1 9 H5 V19 H12 V9 H16 Z" fill="#FFFFFF" stroke="#1E1E1E" stroke-width="1.5"/></svg>
<div id="t87" style="left:2129px;top:1498.0px;height:25px;line-height:25px;font-family:'Liberation Sans', sans-serif;font-size:18.14px;color:#FFFFFF;font-weight:normal;white-space:pre;letter-spacing:0.000px;">添加到源代码管</div>
<div style="left:2262px;top:1489px;width:254px;height:39px;background:#FFFFFF;"></div>
<div style="left:2262px;top:1488.5px;width:254px;height:1.5px;background:#C9D4E4;"></div>
<svg style="left:2246px;top:1481.5px" width="54" height="50" viewBox="0 0 54 50"><defs><linearGradient id="sg" x1="0" y1="1" x2="1" y2="0"><stop offset="0" stop-color="#EE4A10"/><stop offset="1" stop-color="#F47A45"/></linearGradient></defs><path d="M6 12 Q4.5 8 8.5 7 L34 0.5 Q38 -0.5 39.5 3.5 L50 34 Q51 38 47.5 40 Q38 46 27 48 L14.5 50 Q11 50.5 10 47 Z" fill="url(#sg)"/><path d="M44 15 Q33 11 21 15 Q11 19 14 27 Q16 32 28 30 Q36 29 35 33 Q33 39 22 41 Q17 42 13 40 L15.5 45 Q25 46 36 41 Q48 35 45 27 Q43 22 31 24 Q23 25 24 22 Q25 18 36 18 L45.5 19 Z" fill="#FFFFFF"/></svg>
<svg style="left:2305px;top:1497px" width="23" height="24" viewBox="0 0 23 24"><rect x="2" y="5.5" width="19" height="11.5" rx="2.8" fill="none" stroke="#0A6AD0" stroke-width="2.8"/><path d="M11.5 1 V23" stroke="#0A6AD0" stroke-width="2.8" stroke-linecap="round"/></svg>
<svg style="left:2343px;top:1498px" width="20" height="20" viewBox="0 0 20 20"><circle cx="4" cy="5" r="2.6" fill="none" stroke="#1B6AC9" stroke-width="1.8"/><path d="M15 9 Q17 9 16 13 Q15 16 12 18" fill="none" stroke="#1B6AC9" stroke-width="2.6" stroke-linecap="round"/></svg>
<svg style="left:2379px;top:1496px" width="18" height="24" viewBox="0 0 18 24"><rect x="5" y="1" width="8" height="14" rx="4" fill="#1B6AC9"/><path d="M1.5 10 Q2 18 9 18 Q16 18 16.5 10 M9 18 V22 M5 22.5 H13" fill="none" stroke="#1B6AC9" stroke-width="2"/></svg>
<svg style="left:2414px;top:1498px" width="23" height="18" viewBox="0 0 23 18"><rect x="1" y="1" width="21" height="16" rx="2" fill="none" stroke="#1B6AC9" stroke-width="2"/><rect x="4" y="4" width="2.2" height="2.2" fill="#1B6AC9"/><rect x="8" y="4" width="2.2" height="2.2" fill="#1B6AC9"/><rect x="12" y="4" width="2.2" height="2.2" fill="#1B6AC9"/><rect x="16" y="4" width="2.2" height="2.2" fill="#1B6AC9"/><rect x="4" y="8" width="2.2" height="2.2" fill="#1B6AC9"/><rect x="8" y="8" width="2.2" height="2.2" fill="#1B6AC9"/><rect x="12" y="8" width="2.2" height="2.2" fill="#1B6AC9"/><rect x="16" y="8" width="2.2" height="2.2" fill="#1B6AC9"/><rect x="6" y="12" width="11" height="2.2" fill="#1B6AC9"/></svg>
<svg style="left:2449px;top:1497px" width="24" height="22" viewBox="0 0 24 22"><path d="M7 1 L1 5 L4 10 L6 9 V21 H18 V9 L20 10 L23 5 L17 1 Q12 5 7 1 Z" fill="#1B6AC9"/></svg>
<div style="left:2481px;top:1490px;width:34px;height:37px;background:#EEF4FB;"></div>
<svg style="left:2485px;top:1497px" width="21" height="21" viewBox="0 0 21 21"><rect x="1" y="1" width="8" height="8" rx="1.5" fill="#8A7BD8"/><rect x="12" y="1" width="8" height="8" rx="1.5" fill="#7F9DE6"/><rect x="1" y="12" width="8" height="8" rx="1.5" fill="#B77BC9"/><rect x="12" y="12" width="8" height="8" rx="1.5" fill="#7B8FD8"/></svg>
<div style="left:2517px;top:1507px;width:17px;height:17px;border-radius:50%;background:#E81123;color:#FFFFFF;font-size:14px;line-height:17px;text-align:center;font-family:'Liberation Sans',sans-serif">2</div>
<svg style="left:563px;top:288px" width="18" height="5" viewBox="0 0 18 5"><circle cx="3" cy="2.5" r="1.5" fill="#9A9A9A"/><circle cx="9.2" cy="2.5" r="1.5" fill="#9A9A9A"/><circle cx="15.5" cy="2.5" r="1.5" fill="#9A9A9A"/></svg>
<svg style="left:0px;top:0px" width="2560" height="1530" viewBox="0 0 2560 1530"><polygon points="611,531.7 628,523.5 627.5,527.8 2150,606.6 2150,607.4 626.5,535.2 627,540 " fill="#F83434"/><polygon points="480.5,580 491.5,567.5 492.5,570.5 547.5,549.3 547.5,550 494,574 498.5,580.5" fill="#F83434"/></svg>
</body></html>
